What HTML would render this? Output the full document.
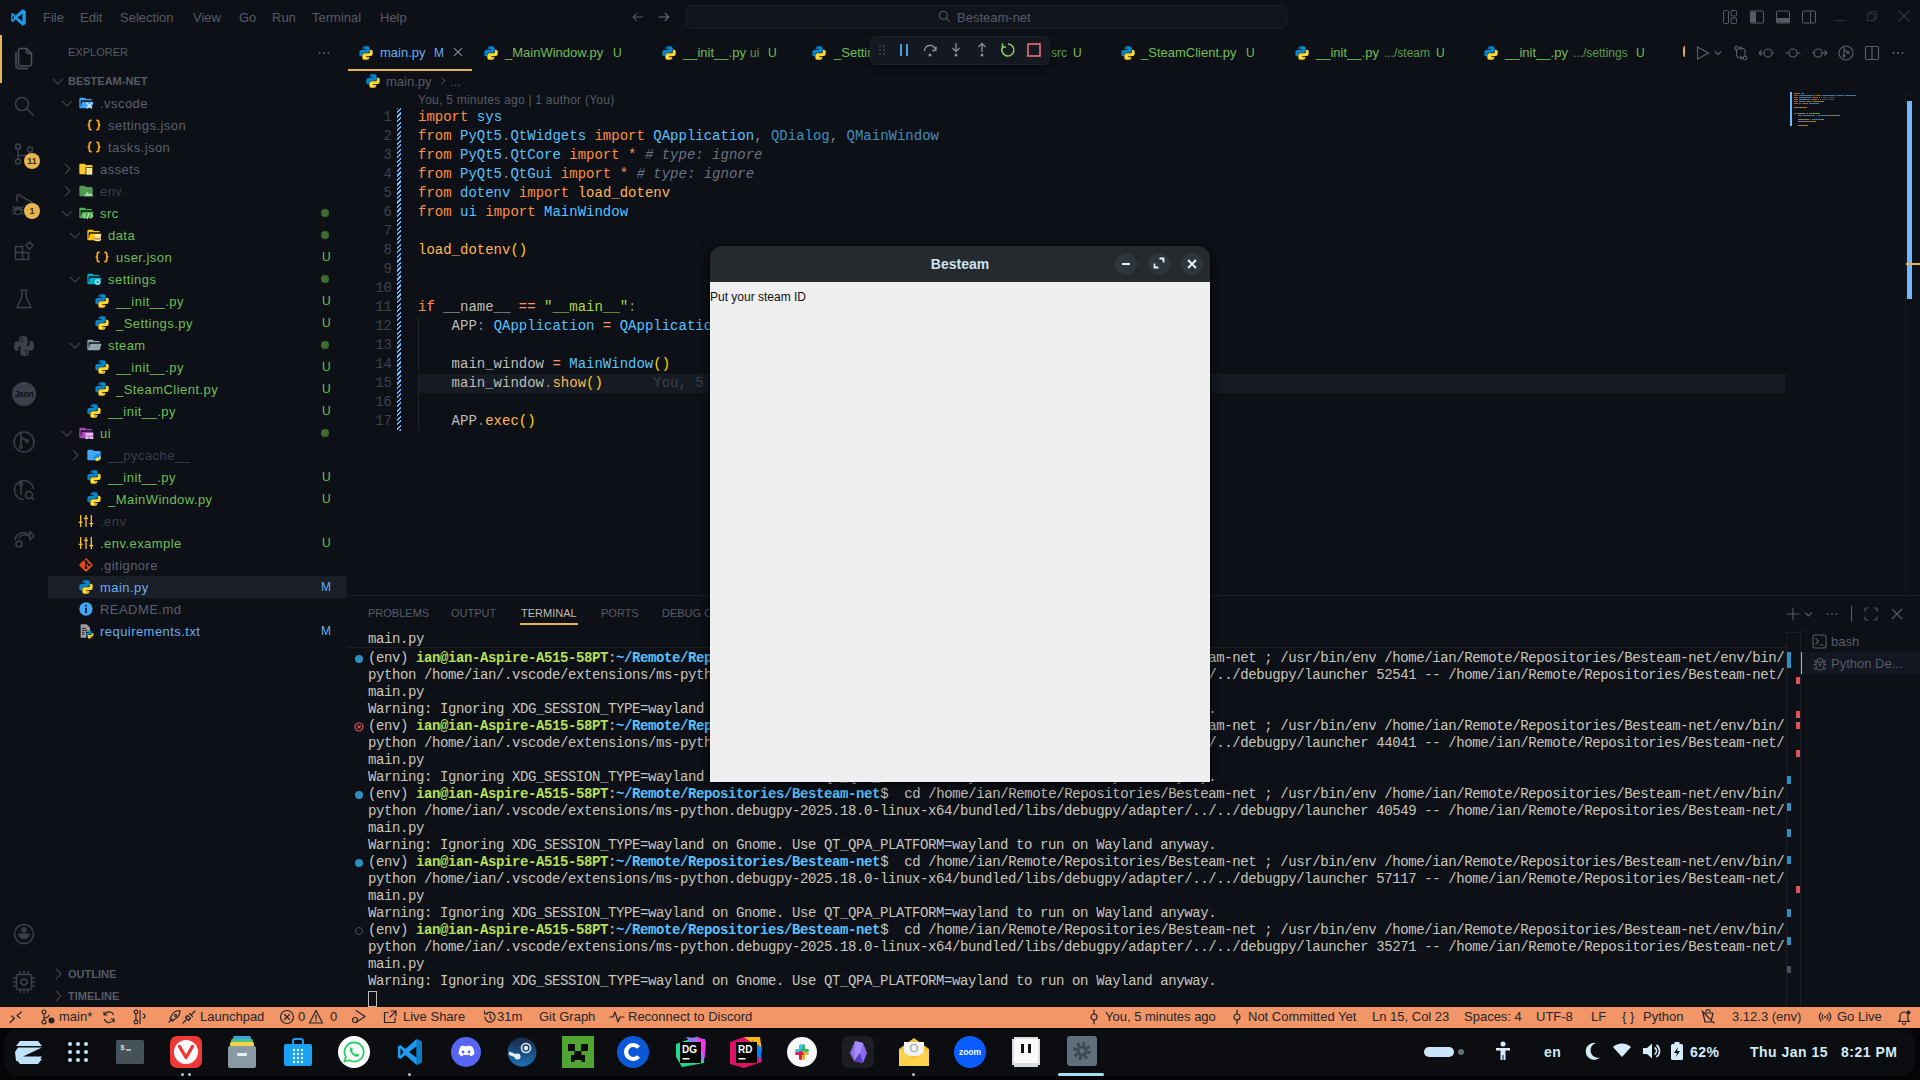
<!DOCTYPE html>
<html><head><meta charset="utf-8">
<style>

*{margin:0;padding:0;box-sizing:border-box}
html,body{width:1920px;height:1080px;overflow:hidden;background:#0d1017;font-family:"Liberation Sans",sans-serif;color:#565b66}
.a{position:absolute;white-space:pre}
svg{position:absolute;overflow:visible}
.mono{font-family:"Liberation Mono",monospace}
.g{color:#70bf56}.m{color:#6aaef0}.dim{color:#3d424c}

.code{position:absolute;font-family:"Liberation Mono",monospace;font-size:14px;line-height:19px;white-space:pre;color:#bfbdb6}
.ef{color:#59c2ff;opacity:.7}.k{color:#ff8f40}.e{color:#59c2ff}.fn{color:#ffb454}.s{color:#aad94c}.cm{color:#6b7180;font-style:italic}.op{color:#f29668}.t{color:#bfbdb6}.pu{color:#bfbdb6b3}.br{color:#ffd700}
.ln{position:absolute;font-family:"Liberation Mono",monospace;font-size:14px;line-height:19px;color:#3d424d;text-align:right;width:40px;left:352px}

.tl{position:absolute;left:368px;font-family:"Liberation Mono",monospace;font-size:14px;line-height:17px;white-space:pre;color:#c8c6bf;letter-spacing:-0.4px}
.tg{color:#b8e05a;font-weight:bold}.tb{color:#59c2ff;font-weight:bold}

</style></head><body>

<div id="menu"><div class="a" style="left:43px;top:10px;font-size:13px;color:#565b66">File</div><div class="a" style="left:80px;top:10px;font-size:13px;color:#565b66">Edit</div><div class="a" style="left:120px;top:10px;font-size:13px;color:#565b66">Selection</div><div class="a" style="left:193px;top:10px;font-size:13px;color:#565b66">View</div><div class="a" style="left:239px;top:10px;font-size:13px;color:#565b66">Go</div><div class="a" style="left:272px;top:10px;font-size:13px;color:#565b66">Run</div><div class="a" style="left:312px;top:10px;font-size:13px;color:#565b66">Terminal</div><div class="a" style="left:380px;top:10px;font-size:13px;color:#565b66">Help</div><svg style="left:10px;top:9px" width="17" height="17" viewBox="0 0 24 24"><path fill="#1c9ce9" d="M17.5 0.5L8 9.2 3.6 5.8 1.7 6.7v10.6l1.9.9L8 14.8l9.5 8.7 4.8-2.3V2.8z M3.6 8.6L6.2 12 3.6 15.4z M17.5 6.6v10.8L10.6 12z"/></svg><svg style="left:631px;top:10px" width="14" height="14" viewBox="0 0 16 16"><path d="M14 8H2.5M7 3.5L2.5 8 7 12.5" stroke="#565b66" stroke-width="1.2" fill="none"/></svg><svg style="left:657px;top:10px" width="14" height="14" viewBox="0 0 16 16"><path d="M2 8h11.5M9 3.5L13.5 8 9 12.5" stroke="#6c7380" stroke-width="1.2" fill="none"/></svg><div class="a" style="left:686px;top:5px;width:601px;height:24px;border:1px solid #1c2029;border-radius:6px;background:#11141b"></div><svg style="left:938px;top:10px" width="13" height="13" viewBox="0 0 16 16"><circle cx="6.5" cy="6.5" r="5" stroke="#565b66" stroke-width="1.3" fill="none"/><path d="M10 10l4.5 4.5" stroke="#565b66" stroke-width="1.3"/></svg><div class="a" style="left:957px;top:10px;font-size:13px;color:#565b66">Besteam-net</div><svg style="left:1722px;top:9px" width="16" height="16" viewBox="0 0 16 16"><rect x="1.5" y="1.5" width="5" height="13" rx="1" stroke="#565b66" fill="none"/><rect x="9" y="1.5" width="5.5" height="5.5" rx="1" stroke="#565b66" fill="none"/><rect x="9" y="9" width="5.5" height="5.5" rx="1" stroke="#565b66" fill="none"/></svg><svg style="left:1749px;top:9px" width="16" height="16" viewBox="0 0 16 16"><rect x="1.5" y="2" width="13" height="12" rx="1" stroke="#565b66" fill="none"/><rect x="2" y="2.5" width="5" height="11" fill="#565b66"/></svg><svg style="left:1775px;top:9px" width="16" height="16" viewBox="0 0 16 16"><rect x="1.5" y="2" width="13" height="12" rx="1" stroke="#565b66" fill="none"/><rect x="2" y="9" width="12" height="4.5" fill="#565b66"/></svg><svg style="left:1801px;top:9px" width="16" height="16" viewBox="0 0 16 16"><rect x="1.5" y="2" width="13" height="12" rx="1" stroke="#565b66" fill="none"/><path d="M9.5 2v12" stroke="#565b66"/></svg><svg style="left:1834px;top:10px" width="12" height="12" viewBox="0 0 12 12"><path d="M1 10.5h10" stroke="#2e323b"/></svg><svg style="left:1866px;top:10px" width="12" height="12" viewBox="0 0 12 12"><rect x="1.5" y="3.5" width="7" height="7" stroke="#2e323b" fill="none"/><path d="M3.5 3.5v-2h7v7h-2" stroke="#2e323b" fill="none"/></svg><svg style="left:1898px;top:10px" width="12" height="12" viewBox="0 0 12 12"><path d="M1 1l10 10M11 1L1 11" stroke="#2e323b" stroke-width="1.2"/></svg></div>
<div class="a" style="left:0;top:35px;width:2px;height:48px;background:#e6b450"></div><svg style="left:12px;top:46px" width="24" height="24" viewBox="0 0 24 24"><path d="M8.5 2.5h6l5 5v10.5a2 2 0 0 1-2 2h-9a2 2 0 0 1-2-2v-13.5a2 2 0 0 1 2-2z" stroke="#4a5060" stroke-width="1.5" fill="none" stroke-linecap="round" stroke-linejoin="round"/><path d="M14.5 2.5v3a2 2 0 0 0 2 2h3" stroke="#4a5060" stroke-width="1.5" fill="none" stroke-linecap="round" stroke-linejoin="round"/><path d="M4 6.5v13a3 3 0 0 0 3 3h8.5" stroke="#4a5060" stroke-width="1.5" fill="none" stroke-linecap="round" stroke-linejoin="round"/></svg><svg style="left:12px;top:94px" width="24" height="24" viewBox="0 0 24 24"><circle cx="10" cy="10" r="6.5" stroke="#3b404b" stroke-width="1.5" fill="none" stroke-linecap="round" stroke-linejoin="round"/><path d="M15 15l6 6" stroke="#3b404b" stroke-width="1.5" fill="none" stroke-linecap="round" stroke-linejoin="round"/></svg><svg style="left:12px;top:142px" width="24" height="24" viewBox="0 0 24 24"><circle cx="6" cy="4.5" r="2.5" stroke="#3b404b" stroke-width="1.5" fill="none" stroke-linecap="round" stroke-linejoin="round"/><circle cx="6" cy="19.5" r="2.5" stroke="#3b404b" stroke-width="1.5" fill="none" stroke-linecap="round" stroke-linejoin="round"/><circle cx="18" cy="7.5" r="2.5" stroke="#3b404b" stroke-width="1.5" fill="none" stroke-linecap="round" stroke-linejoin="round"/><path d="M6 7v10M6 13.5h9a3 3 0 0 0 3-3" stroke="#3b404b" stroke-width="1.5" fill="none" stroke-linecap="round" stroke-linejoin="round"/></svg><div class="a" style="left:24px;top:153px;width:16px;height:16px;border-radius:8px;background:#e6b450;color:#3a2f12;font-size:9px;line-height:16px;text-align:center;font-weight:bold">11</div><svg style="left:12px;top:192px" width="24" height="24" viewBox="0 0 24 24"><path d="M5 9.5V3.5a1 1 0 0 1 1.5-.8L20 10.5" stroke="#3b404b" stroke-width="1.5" fill="none" stroke-linecap="round" stroke-linejoin="round"/><path d="M3.5 17.5a2.5 2.5 0 0 1 5 0z" stroke="#3b404b" stroke-width="1.5" fill="none" stroke-linecap="round" stroke-linejoin="round"/><path d="M2.8 16.5h6.4v2.5a3.2 3.6 0 0 1-6.4 0z" stroke="#3b404b" stroke-width="1.5" fill="none" stroke-linecap="round" stroke-linejoin="round"/><path d="M1 14.5l1.8 1.5M11 14.5l-1.8 1.5M0.5 18h2.3M11.5 18h-2.3M1 22l1.8-1.5M11 22l-1.8-1.5" stroke="#3b404b" stroke-width="1.5" fill="none" stroke-linecap="round" stroke-linejoin="round"/></svg><div class="a" style="left:24px;top:203px;width:16px;height:16px;border-radius:8px;background:#e6b450;color:#3a2f12;font-size:9px;line-height:16px;text-align:center;font-weight:bold">1</div><svg style="left:12px;top:239px" width="24" height="24" viewBox="0 0 24 24"><path d="M3.5 7.5h7v6h6v7h-13z M3.5 13.5h7v7M10.5 13.5v7" stroke="#3b404b" stroke-width="1.5" fill="none" stroke-linecap="round" stroke-linejoin="round"/><path d="M14 6.5l3.5-3.5 3.5 3.5-3.5 3.5z" stroke="#3b404b" stroke-width="1.5" fill="none" stroke-linecap="round" stroke-linejoin="round"/></svg><svg style="left:12px;top:287px" width="24" height="24" viewBox="0 0 24 24"><path d="M9 3h6M10 3v6.5L5 20.5h14L14 9.5V3" stroke="#3b404b" stroke-width="1.5" fill="none" stroke-linecap="round" stroke-linejoin="round"/></svg><svg style="left:12px;top:334px" width="24" height="24" viewBox="0 0 24 24"><path fill="#3b404b" d="M11.9 2c-5.2 0-4.9 2.3-4.9 2.3v2.4h5v.7H5S2 7 2 12.1c0 5 2.6 4.9 2.6 4.9h1.6v-2.4s-.1-2.6 2.6-2.6h4.4s2.5 0 2.5-2.4V5.5S16.1 2 11.9 2z M9.2 3.6c.5 0 .9.4.9.9s-.4.9-.9.9-.9-.4-.9-.9.4-.9.9-.9z"/><path fill="#3b404b" d="M12.1 22c5.2 0 4.9-2.3 4.9-2.3v-2.4h-5v-.7h7s3 .3 3-4.7c0-5-2.6-4.9-2.6-4.9h-1.6v2.4s.1 2.6-2.6 2.6H10.8s-2.5 0-2.5 2.4v4.1S7.9 22 12.1 22z M14.8 20.4c-.5 0-.9-.4-.9-.9s.4-.9.9-.9.9.4.9.9-.4.9-.9.9z"/></svg><div class="a" style="left:12px;top:382px;width:24px;height:24px;border-radius:12px;background:#3b404b;color:#0b0e14;font-size:8.5px;line-height:24px;text-align:center;font-weight:bold;letter-spacing:-0.3px">Json</div><svg style="left:12px;top:430px" width="24" height="24" viewBox="0 0 24 24"><circle cx="12" cy="12" r="10" stroke="#3b404b" stroke-width="1.5" fill="none" stroke-linecap="round" stroke-linejoin="round"/><circle cx="9" cy="17" r="1.3" stroke="#3b404b" stroke-width="1.5" fill="none" stroke-linecap="round" stroke-linejoin="round"/><circle cx="15" cy="11" r="1.3" stroke="#3b404b" stroke-width="1.5" fill="none" stroke-linecap="round" stroke-linejoin="round"/><path d="M9 3v12.5M9 8l5 2" stroke="#3b404b" stroke-width="1.5" fill="none" stroke-linecap="round" stroke-linejoin="round"/></svg><svg style="left:12px;top:478px" width="24" height="24" viewBox="0 0 24 24"><path d="M11 21.5a9.5 9.5 0 1 1 10.3-11" stroke="#3b404b" stroke-width="1.5" fill="none" stroke-linecap="round" stroke-linejoin="round"/><circle cx="9" cy="6" r="1.5" stroke="#3b404b" stroke-width="1.5" fill="none" stroke-linecap="round" stroke-linejoin="round"/><path d="M9 7.5v9" stroke="#3b404b" stroke-width="1.5" fill="none" stroke-linecap="round" stroke-linejoin="round"/><circle cx="17" cy="17" r="3.5" stroke="#3b404b" stroke-width="1.5" fill="none" stroke-linecap="round" stroke-linejoin="round"/><path d="M19.5 19.5l2 2" stroke="#3b404b" stroke-width="1.5" fill="none" stroke-linecap="round" stroke-linejoin="round"/></svg><svg style="left:12px;top:526px" width="24" height="24" viewBox="0 0 24 24"><circle cx="7" cy="18" r="3" stroke="#3b404b" stroke-width="1.5" fill="none" stroke-linecap="round" stroke-linejoin="round"/><path d="M3 13.5a9 9 0 0 1 15-4.5V5.5l4 4.5-4 4v-3a7 7 0 0 0-11 1" stroke="#3b404b" stroke-width="1.5" fill="none" stroke-linecap="round" stroke-linejoin="round"/></svg><svg style="left:12px;top:922px" width="24" height="24" viewBox="0 0 24 24"><circle cx="12" cy="12" r="9.5" stroke="#3b404b" stroke-width="1.5" fill="none" stroke-linecap="round" stroke-linejoin="round"/><circle cx="12" cy="7.8" r="2.8" fill="#3b404b"/><path d="M6.3 11.5h11.4a5.7 5.7 0 0 1-11.4 0z" fill="#3b404b"/></svg><svg style="left:12px;top:970px" width="24" height="24" viewBox="0 0 24 24"><rect x="4.5" y="4.5" width="15" height="15" rx="2" stroke="#3b404b" stroke-width="1.5" fill="none" stroke-linecap="round" stroke-linejoin="round"/><circle cx="12" cy="12" r="3" stroke="#3b404b" stroke-width="1.5" fill="none" stroke-linecap="round" stroke-linejoin="round"/><path d="M8 1.5v3M12 1.5v3M16 1.5v3M8 19.5v3M12 19.5v3M16 19.5v3M1.5 8h3M1.5 12h3M1.5 16h3M19.5 8h3M19.5 12h3M19.5 16h3" stroke="#3b404b" stroke-width="1.5" fill="none" stroke-linecap="round" stroke-linejoin="round"/></svg>
<div class="a" style="left:68px;top:46px;font-size:11px;color:#565b66">EXPLORER</div><svg style="left:316px;top:45px" width="16" height="16" viewBox="0 0 16 16"><circle cx="3.5" cy="8" r="1" fill="#565b66"/><circle cx="8" cy="8" r="1" fill="#565b66"/><circle cx="12.5" cy="8" r="1" fill="#565b66"/></svg><svg style="left:50px;top:73px" width="16" height="16" viewBox="0 0 16 16"><path d="M3 6l5 5 5-5" stroke="#3d4350" stroke-width="1.1" fill="none"/></svg><div class="a" style="left:68px;top:75px;font-size:11px;font-weight:bold;color:#565b66">BESTEAM-NET</div><svg style="left:59px;top:95px" width="16" height="16" viewBox="0 0 16 16"><path d="M3 6l5 5 5-5" stroke="#3d4350" stroke-width="1.1" fill="none"/></svg><svg style="left:78px;top:95px" width="16" height="16" viewBox="0 0 24 24"><path fill="#42a5f5" d="M19 20H4a2 2 0 0 1-2-2V6c0-1.11.89-2 2-2h6l2 2h7a2 2 0 0 1 2 2H4v10l2.14-8h17.07l-2.28 8.5c-.23.87-1.01 1.5-1.93 1.5"/><path d="M13 12l8 8M21 12l-8 8" stroke="#d6ecff" stroke-width="2"/></svg><div class="a" style="left:100px;top:96px;font-size:13px;letter-spacing:.45px;color:#5a6070">.vscode</div><svg style="left:86px;top:117px" width="16" height="16" viewBox="0 0 24 24"><path fill="none" stroke="#f9a825" stroke-width="2.6" stroke-linecap="round" d="M7.5 5H7a2 2 0 0 0-2 2v2.5a2.5 2.5 0 0 1-2.5 2.5 2.5 2.5 0 0 1 2.5 2.5V17a2 2 0 0 0 2 2h.5M16.5 5h.5a2 2 0 0 1 2 2v2.5a2.5 2.5 0 0 0 2.5 2.5 2.5 2.5 0 0 0-2.5 2.5V17a2 2 0 0 1-2 2h-.5"/></svg><div class="a" style="left:108px;top:118px;font-size:13px;letter-spacing:.45px;color:#5a6070">settings.json</div><svg style="left:86px;top:139px" width="16" height="16" viewBox="0 0 24 24"><path fill="none" stroke="#f9a825" stroke-width="2.6" stroke-linecap="round" d="M7.5 5H7a2 2 0 0 0-2 2v2.5a2.5 2.5 0 0 1-2.5 2.5 2.5 2.5 0 0 1 2.5 2.5V17a2 2 0 0 0 2 2h.5M16.5 5h.5a2 2 0 0 1 2 2v2.5a2.5 2.5 0 0 0 2.5 2.5 2.5 2.5 0 0 0-2.5 2.5V17a2 2 0 0 1-2 2h-.5"/></svg><div class="a" style="left:108px;top:140px;font-size:13px;letter-spacing:.45px;color:#5a6070">tasks.json</div><svg style="left:59px;top:161px" width="16" height="16" viewBox="0 0 16 16"><path d="M6 3l5 5-5 5" stroke="#3d4350" stroke-width="1.1" fill="none"/></svg><svg style="left:78px;top:161px" width="16" height="16" viewBox="0 0 24 24"><path fill="#ffca28" d="M10 4H4c-1.1 0-2 .9-2 2v12c0 1.1.9 2 2 2h16c1.1 0 2-.9 2-2V8c0-1.1-.9-2-2-2h-8z"/><rect x="12" y="10" width="10" height="11" fill="#fff4c4" stroke="#0b0e14" stroke-width="1"/><path d="M14 13h6M14 15.5h6M14 18h6" stroke="#ffca28" stroke-width="1.2"/></svg><div class="a" style="left:100px;top:162px;font-size:13px;letter-spacing:.45px;color:#5a6070">assets</div><svg style="left:59px;top:183px" width="16" height="16" viewBox="0 0 16 16"><path d="M6 3l5 5-5 5" stroke="#3d4350" stroke-width="1.1" fill="none"/></svg><svg style="left:78px;top:183px" width="16" height="16" viewBox="0 0 24 24"><path fill="#4e9a52" d="M10 4H4c-1.1 0-2 .9-2 2v12c0 1.1.9 2 2 2h16c1.1 0 2-.9 2-2V8c0-1.1-.9-2-2-2h-8z"/><path d="M9 20l5-7 3 4 2-2 4 5z" fill="#a5d6a7"/></svg><div class="a" style="left:100px;top:184px;font-size:13px;letter-spacing:.45px;color:#3a3f4a">env</div><svg style="left:59px;top:205px" width="16" height="16" viewBox="0 0 16 16"><path d="M3 6l5 5 5-5" stroke="#3d4350" stroke-width="1.1" fill="none"/></svg><svg style="left:78px;top:205px" width="16" height="16" viewBox="0 0 24 24"><path fill="#4caf50" d="M19 20H4a2 2 0 0 1-2-2V6c0-1.11.89-2 2-2h6l2 2h7a2 2 0 0 1 2 2H4v10l2.14-8h17.07l-2.28 8.5c-.23.87-1.01 1.5-1.93 1.5"/><path d="M11 13l-3 3.5 3 3.5M19 13l3 3.5-3 3.5M16.5 12l-3 9" stroke="#c8e6c9" stroke-width="1.6" fill="none"/></svg><div class="a" style="left:100px;top:206px;font-size:13px;letter-spacing:.45px;color:#70bf56">src</div><div class="a" style="left:321px;top:209px;width:8px;height:8px;border-radius:4px;background:#3f6b30"></div><svg style="left:67px;top:227px" width="16" height="16" viewBox="0 0 16 16"><path d="M3 6l5 5 5-5" stroke="#3d4350" stroke-width="1.1" fill="none"/></svg><svg style="left:86px;top:227px" width="16" height="16" viewBox="0 0 24 24"><path fill="#ffc107" d="M19 20H4a2 2 0 0 1-2-2V6c0-1.11.89-2 2-2h6l2 2h7a2 2 0 0 1 2 2H4v10l2.14-8h17.07l-2.28 8.5c-.23.87-1.01 1.5-1.93 1.5"/><ellipse cx="17.5" cy="12.5" rx="5" ry="2" fill="#ffecb3"/><path d="M12.5 13v6.5c0 1.1 2.2 2 5 2s5-.9 5-2V13" fill="#ffe082"/><path d="M12.5 16c0 1.1 2.2 2 5 2s5-.9 5-2" stroke="#0b0e14" stroke-width=".8" fill="none"/></svg><div class="a" style="left:108px;top:228px;font-size:13px;letter-spacing:.45px;color:#70bf56">data</div><div class="a" style="left:321px;top:231px;width:8px;height:8px;border-radius:4px;background:#3f6b30"></div><svg style="left:94px;top:249px" width="16" height="16" viewBox="0 0 24 24"><path fill="none" stroke="#f9a825" stroke-width="2.6" stroke-linecap="round" d="M7.5 5H7a2 2 0 0 0-2 2v2.5a2.5 2.5 0 0 1-2.5 2.5 2.5 2.5 0 0 1 2.5 2.5V17a2 2 0 0 0 2 2h.5M16.5 5h.5a2 2 0 0 1 2 2v2.5a2.5 2.5 0 0 0 2.5 2.5 2.5 2.5 0 0 0-2.5 2.5V17a2 2 0 0 1-2 2h-.5"/></svg><div class="a" style="left:116px;top:250px;font-size:13px;letter-spacing:.45px;color:#70bf56">user.json</div><div class="a" style="left:322px;top:250px;font-size:12px;color:#70bf56">U</div><svg style="left:67px;top:271px" width="16" height="16" viewBox="0 0 16 16"><path d="M3 6l5 5 5-5" stroke="#3d4350" stroke-width="1.1" fill="none"/></svg><svg style="left:86px;top:271px" width="16" height="16" viewBox="0 0 24 24"><path fill="#00acc1" d="M19 20H4a2 2 0 0 1-2-2V6c0-1.11.89-2 2-2h6l2 2h7a2 2 0 0 1 2 2H4v10l2.14-8h17.07l-2.28 8.5c-.23.87-1.01 1.5-1.93 1.5"/><circle cx="17.5" cy="16.5" r="4.5" fill="#80deea"/><circle cx="17.5" cy="16.5" r="1.6" fill="#00838f"/></svg><div class="a" style="left:108px;top:272px;font-size:13px;letter-spacing:.45px;color:#70bf56">settings</div><div class="a" style="left:321px;top:275px;width:8px;height:8px;border-radius:4px;background:#3f6b30"></div><svg style="left:94px;top:293px" width="16" height="16" viewBox="0 0 24 24"><path fill="#0288d1" d="M9.86 2A2.86 2.86 0 0 0 7 4.86v1.68h4.29c.39 0 .71.57.71.96H4.86A2.86 2.86 0 0 0 2 10.36v3.78a2.86 2.86 0 0 0 2.86 2.86h1.18v-2.68a2.85 2.85 0 0 1 2.85-2.86h5.74c1.58 0 2.86-1.27 2.86-2.85V4.86A2.86 2.86 0 0 0 14.63 2zm-.72 1.61c.4 0 .72.12.72.71s-.32.89-.72.89c-.39 0-.71-.3-.71-.89s.32-.71.71-.71"/><path fill="#fdd835" d="M17.96 7v2.68a2.85 2.85 0 0 1-2.85 2.86H9.37A2.85 2.85 0 0 0 6.5 15.39v3.75a2.86 2.86 0 0 0 2.86 2.86h4.77A2.86 2.86 0 0 0 17 19.14v-1.68h-4.28c-.39 0-.71-.57-.71-.96h7.14A2.86 2.86 0 0 0 22 13.64V9.86A2.86 2.86 0 0 0 19.14 7zm-3.1 11.82c.39 0 .71.3.71.89a.71.71 0 0 1-.71.71c-.4 0-.72-.12-.72-.71s.32-.89.72-.89"/></svg><div class="a" style="left:116px;top:294px;font-size:13px;letter-spacing:.45px;color:#70bf56">__init__.py</div><div class="a" style="left:322px;top:294px;font-size:12px;color:#70bf56">U</div><svg style="left:94px;top:315px" width="16" height="16" viewBox="0 0 24 24"><path fill="#0288d1" d="M9.86 2A2.86 2.86 0 0 0 7 4.86v1.68h4.29c.39 0 .71.57.71.96H4.86A2.86 2.86 0 0 0 2 10.36v3.78a2.86 2.86 0 0 0 2.86 2.86h1.18v-2.68a2.85 2.85 0 0 1 2.85-2.86h5.74c1.58 0 2.86-1.27 2.86-2.85V4.86A2.86 2.86 0 0 0 14.63 2zm-.72 1.61c.4 0 .72.12.72.71s-.32.89-.72.89c-.39 0-.71-.3-.71-.89s.32-.71.71-.71"/><path fill="#fdd835" d="M17.96 7v2.68a2.85 2.85 0 0 1-2.85 2.86H9.37A2.85 2.85 0 0 0 6.5 15.39v3.75a2.86 2.86 0 0 0 2.86 2.86h4.77A2.86 2.86 0 0 0 17 19.14v-1.68h-4.28c-.39 0-.71-.57-.71-.96h7.14A2.86 2.86 0 0 0 22 13.64V9.86A2.86 2.86 0 0 0 19.14 7zm-3.1 11.82c.39 0 .71.3.71.89a.71.71 0 0 1-.71.71c-.4 0-.72-.12-.72-.71s.32-.89.72-.89"/></svg><div class="a" style="left:116px;top:316px;font-size:13px;letter-spacing:.45px;color:#70bf56">_Settings.py</div><div class="a" style="left:322px;top:316px;font-size:12px;color:#70bf56">U</div><svg style="left:67px;top:337px" width="16" height="16" viewBox="0 0 16 16"><path d="M3 6l5 5 5-5" stroke="#3d4350" stroke-width="1.1" fill="none"/></svg><svg style="left:86px;top:337px" width="16" height="16" viewBox="0 0 24 24"><path fill="#90a4ae" d="M19 20H4a2 2 0 0 1-2-2V6c0-1.11.89-2 2-2h6l2 2h7a2 2 0 0 1 2 2H4v10l2.14-8h17.07l-2.28 8.5c-.23.87-1.01 1.5-1.93 1.5"/></svg><div class="a" style="left:108px;top:338px;font-size:13px;letter-spacing:.45px;color:#70bf56">steam</div><div class="a" style="left:321px;top:341px;width:8px;height:8px;border-radius:4px;background:#3f6b30"></div><svg style="left:94px;top:359px" width="16" height="16" viewBox="0 0 24 24"><path fill="#0288d1" d="M9.86 2A2.86 2.86 0 0 0 7 4.86v1.68h4.29c.39 0 .71.57.71.96H4.86A2.86 2.86 0 0 0 2 10.36v3.78a2.86 2.86 0 0 0 2.86 2.86h1.18v-2.68a2.85 2.85 0 0 1 2.85-2.86h5.74c1.58 0 2.86-1.27 2.86-2.85V4.86A2.86 2.86 0 0 0 14.63 2zm-.72 1.61c.4 0 .72.12.72.71s-.32.89-.72.89c-.39 0-.71-.3-.71-.89s.32-.71.71-.71"/><path fill="#fdd835" d="M17.96 7v2.68a2.85 2.85 0 0 1-2.85 2.86H9.37A2.85 2.85 0 0 0 6.5 15.39v3.75a2.86 2.86 0 0 0 2.86 2.86h4.77A2.86 2.86 0 0 0 17 19.14v-1.68h-4.28c-.39 0-.71-.57-.71-.96h7.14A2.86 2.86 0 0 0 22 13.64V9.86A2.86 2.86 0 0 0 19.14 7zm-3.1 11.82c.39 0 .71.3.71.89a.71.71 0 0 1-.71.71c-.4 0-.72-.12-.72-.71s.32-.89.72-.89"/></svg><div class="a" style="left:116px;top:360px;font-size:13px;letter-spacing:.45px;color:#70bf56">__init__.py</div><div class="a" style="left:322px;top:360px;font-size:12px;color:#70bf56">U</div><svg style="left:94px;top:381px" width="16" height="16" viewBox="0 0 24 24"><path fill="#0288d1" d="M9.86 2A2.86 2.86 0 0 0 7 4.86v1.68h4.29c.39 0 .71.57.71.96H4.86A2.86 2.86 0 0 0 2 10.36v3.78a2.86 2.86 0 0 0 2.86 2.86h1.18v-2.68a2.85 2.85 0 0 1 2.85-2.86h5.74c1.58 0 2.86-1.27 2.86-2.85V4.86A2.86 2.86 0 0 0 14.63 2zm-.72 1.61c.4 0 .72.12.72.71s-.32.89-.72.89c-.39 0-.71-.3-.71-.89s.32-.71.71-.71"/><path fill="#fdd835" d="M17.96 7v2.68a2.85 2.85 0 0 1-2.85 2.86H9.37A2.85 2.85 0 0 0 6.5 15.39v3.75a2.86 2.86 0 0 0 2.86 2.86h4.77A2.86 2.86 0 0 0 17 19.14v-1.68h-4.28c-.39 0-.71-.57-.71-.96h7.14A2.86 2.86 0 0 0 22 13.64V9.86A2.86 2.86 0 0 0 19.14 7zm-3.1 11.82c.39 0 .71.3.71.89a.71.71 0 0 1-.71.71c-.4 0-.72-.12-.72-.71s.32-.89.72-.89"/></svg><div class="a" style="left:116px;top:382px;font-size:13px;letter-spacing:.45px;color:#70bf56">_SteamClient.py</div><div class="a" style="left:322px;top:382px;font-size:12px;color:#70bf56">U</div><svg style="left:86px;top:403px" width="16" height="16" viewBox="0 0 24 24"><path fill="#0288d1" d="M9.86 2A2.86 2.86 0 0 0 7 4.86v1.68h4.29c.39 0 .71.57.71.96H4.86A2.86 2.86 0 0 0 2 10.36v3.78a2.86 2.86 0 0 0 2.86 2.86h1.18v-2.68a2.85 2.85 0 0 1 2.85-2.86h5.74c1.58 0 2.86-1.27 2.86-2.85V4.86A2.86 2.86 0 0 0 14.63 2zm-.72 1.61c.4 0 .72.12.72.71s-.32.89-.72.89c-.39 0-.71-.3-.71-.89s.32-.71.71-.71"/><path fill="#fdd835" d="M17.96 7v2.68a2.85 2.85 0 0 1-2.85 2.86H9.37A2.85 2.85 0 0 0 6.5 15.39v3.75a2.86 2.86 0 0 0 2.86 2.86h4.77A2.86 2.86 0 0 0 17 19.14v-1.68h-4.28c-.39 0-.71-.57-.71-.96h7.14A2.86 2.86 0 0 0 22 13.64V9.86A2.86 2.86 0 0 0 19.14 7zm-3.1 11.82c.39 0 .71.3.71.89a.71.71 0 0 1-.71.71c-.4 0-.72-.12-.72-.71s.32-.89.72-.89"/></svg><div class="a" style="left:108px;top:404px;font-size:13px;letter-spacing:.45px;color:#70bf56">__init__.py</div><div class="a" style="left:322px;top:404px;font-size:12px;color:#70bf56">U</div><svg style="left:59px;top:425px" width="16" height="16" viewBox="0 0 16 16"><path d="M3 6l5 5 5-5" stroke="#3d4350" stroke-width="1.1" fill="none"/></svg><svg style="left:78px;top:425px" width="16" height="16" viewBox="0 0 24 24"><path fill="#ab47bc" d="M19 20H4a2 2 0 0 1-2-2V6c0-1.11.89-2 2-2h6l2 2h7a2 2 0 0 1 2 2H4v10l2.14-8h17.07l-2.28 8.5c-.23.87-1.01 1.5-1.93 1.5"/><rect x="11" y="12" width="12" height="4" fill="#e1bee7"/><rect x="11" y="17" width="5" height="4" fill="#e1bee7"/><rect x="17" y="17" width="6" height="4" fill="#e1bee7"/></svg><div class="a" style="left:100px;top:426px;font-size:13px;letter-spacing:.45px;color:#70bf56">ui</div><div class="a" style="left:321px;top:429px;width:8px;height:8px;border-radius:4px;background:#3f6b30"></div><svg style="left:67px;top:447px" width="16" height="16" viewBox="0 0 16 16"><path d="M6 3l5 5-5 5" stroke="#3d4350" stroke-width="1.1" fill="none"/></svg><svg style="left:86px;top:447px" width="16" height="16" viewBox="0 0 24 24"><path fill="#42a5f5" d="M10 4H4c-1.1 0-2 .9-2 2v12c0 1.1.9 2 2 2h16c1.1 0 2-.9 2-2V8c0-1.1-.9-2-2-2h-8z"/><g transform="translate(11,10) scale(.5)"><path fill="#0288d1" d="M9.86 2A2.86 2.86 0 0 0 7 4.86v1.68h4.29c.39 0 .71.57.71.96H4.86A2.86 2.86 0 0 0 2 10.36v3.78a2.86 2.86 0 0 0 2.86 2.86h1.18v-2.68a2.85 2.85 0 0 1 2.85-2.86h5.74c1.58 0 2.86-1.27 2.86-2.85V4.86A2.86 2.86 0 0 0 14.63 2zm-.72 1.61c.4 0 .72.12.72.71s-.32.89-.72.89c-.39 0-.71-.3-.71-.89s.32-.71.71-.71"/><path fill="#fdd835" d="M17.96 7v2.68a2.85 2.85 0 0 1-2.85 2.86H9.37A2.85 2.85 0 0 0 6.5 15.39v3.75a2.86 2.86 0 0 0 2.86 2.86h4.77A2.86 2.86 0 0 0 17 19.14v-1.68h-4.28c-.39 0-.71-.57-.71-.96h7.14A2.86 2.86 0 0 0 22 13.64V9.86A2.86 2.86 0 0 0 19.14 7zm-3.1 11.82c.39 0 .71.3.71.89a.71.71 0 0 1-.71.71c-.4 0-.72-.12-.72-.71s.32-.89.72-.89"/></g></svg><div class="a" style="left:108px;top:448px;font-size:13px;letter-spacing:.45px;color:#3a3f4a">__pycache__</div><svg style="left:86px;top:469px" width="16" height="16" viewBox="0 0 24 24"><path fill="#0288d1" d="M9.86 2A2.86 2.86 0 0 0 7 4.86v1.68h4.29c.39 0 .71.57.71.96H4.86A2.86 2.86 0 0 0 2 10.36v3.78a2.86 2.86 0 0 0 2.86 2.86h1.18v-2.68a2.85 2.85 0 0 1 2.85-2.86h5.74c1.58 0 2.86-1.27 2.86-2.85V4.86A2.86 2.86 0 0 0 14.63 2zm-.72 1.61c.4 0 .72.12.72.71s-.32.89-.72.89c-.39 0-.71-.3-.71-.89s.32-.71.71-.71"/><path fill="#fdd835" d="M17.96 7v2.68a2.85 2.85 0 0 1-2.85 2.86H9.37A2.85 2.85 0 0 0 6.5 15.39v3.75a2.86 2.86 0 0 0 2.86 2.86h4.77A2.86 2.86 0 0 0 17 19.14v-1.68h-4.28c-.39 0-.71-.57-.71-.96h7.14A2.86 2.86 0 0 0 22 13.64V9.86A2.86 2.86 0 0 0 19.14 7zm-3.1 11.82c.39 0 .71.3.71.89a.71.71 0 0 1-.71.71c-.4 0-.72-.12-.72-.71s.32-.89.72-.89"/></svg><div class="a" style="left:108px;top:470px;font-size:13px;letter-spacing:.45px;color:#70bf56">__init__.py</div><div class="a" style="left:322px;top:470px;font-size:12px;color:#70bf56">U</div><svg style="left:86px;top:491px" width="16" height="16" viewBox="0 0 24 24"><path fill="#0288d1" d="M9.86 2A2.86 2.86 0 0 0 7 4.86v1.68h4.29c.39 0 .71.57.71.96H4.86A2.86 2.86 0 0 0 2 10.36v3.78a2.86 2.86 0 0 0 2.86 2.86h1.18v-2.68a2.85 2.85 0 0 1 2.85-2.86h5.74c1.58 0 2.86-1.27 2.86-2.85V4.86A2.86 2.86 0 0 0 14.63 2zm-.72 1.61c.4 0 .72.12.72.71s-.32.89-.72.89c-.39 0-.71-.3-.71-.89s.32-.71.71-.71"/><path fill="#fdd835" d="M17.96 7v2.68a2.85 2.85 0 0 1-2.85 2.86H9.37A2.85 2.85 0 0 0 6.5 15.39v3.75a2.86 2.86 0 0 0 2.86 2.86h4.77A2.86 2.86 0 0 0 17 19.14v-1.68h-4.28c-.39 0-.71-.57-.71-.96h7.14A2.86 2.86 0 0 0 22 13.64V9.86A2.86 2.86 0 0 0 19.14 7zm-3.1 11.82c.39 0 .71.3.71.89a.71.71 0 0 1-.71.71c-.4 0-.72-.12-.72-.71s.32-.89.72-.89"/></svg><div class="a" style="left:108px;top:492px;font-size:13px;letter-spacing:.45px;color:#70bf56">_MainWindow.py</div><div class="a" style="left:322px;top:492px;font-size:12px;color:#70bf56">U</div><svg style="left:78px;top:513px" width="16" height="16" viewBox="0 0 24 24"><path d="M4 3v18M12 3v18M20 3v18M1 14h6M9 8h6M17 16h6" stroke="#fbc02d" stroke-width="2"/></svg><div class="a" style="left:100px;top:514px;font-size:13px;letter-spacing:.45px;color:#3a3f4a">.env</div><svg style="left:78px;top:535px" width="16" height="16" viewBox="0 0 24 24"><path d="M4 3v18M12 3v18M20 3v18M1 14h6M9 8h6M17 16h6" stroke="#fbc02d" stroke-width="2"/></svg><div class="a" style="left:100px;top:536px;font-size:13px;letter-spacing:.45px;color:#70bf56">.env.example</div><div class="a" style="left:322px;top:536px;font-size:12px;color:#70bf56">U</div><svg style="left:78px;top:557px" width="16" height="16" viewBox="0 0 24 24"><path fill="#e64a19" d="M2.6 10.59L8.38 4.8l1.69 1.7c-.24.85.15 1.78.93 2.23v5.54c-.6.34-1 .99-1 1.73a2 2 0 0 0 2 2 2 2 0 0 0 2-2c0-.74-.4-1.39-1-1.73V9.41l2.07 2.09c-.07.15-.07.32-.07.5a2 2 0 0 0 2 2 2 2 0 0 0 2-2 2 2 0 0 0-2-2c-.18 0-.35 0-.5.07L13.93 7.5a1.98 1.98 0 0 0-1.15-2.34c-.43-.16-.88-.2-1.28-.09L9.8 3.38l.79-.78c.78-.79 2.04-.79 2.82 0l7.99 7.99c.79.78.79 2.04 0 2.82l-7.99 7.99c-.78.79-2.04.79-2.82 0L2.6 13.41c-.79-.78-.79-2.04 0-2.82"/></svg><div class="a" style="left:100px;top:558px;font-size:13px;letter-spacing:.45px;color:#5a6070">.gitignore</div><div class="a" style="left:48px;top:576px;width:299px;height:22px;background:#1a1e27"></div><svg style="left:78px;top:579px" width="16" height="16" viewBox="0 0 24 24"><path fill="#0288d1" d="M9.86 2A2.86 2.86 0 0 0 7 4.86v1.68h4.29c.39 0 .71.57.71.96H4.86A2.86 2.86 0 0 0 2 10.36v3.78a2.86 2.86 0 0 0 2.86 2.86h1.18v-2.68a2.85 2.85 0 0 1 2.85-2.86h5.74c1.58 0 2.86-1.27 2.86-2.85V4.86A2.86 2.86 0 0 0 14.63 2zm-.72 1.61c.4 0 .72.12.72.71s-.32.89-.72.89c-.39 0-.71-.3-.71-.89s.32-.71.71-.71"/><path fill="#fdd835" d="M17.96 7v2.68a2.85 2.85 0 0 1-2.85 2.86H9.37A2.85 2.85 0 0 0 6.5 15.39v3.75a2.86 2.86 0 0 0 2.86 2.86h4.77A2.86 2.86 0 0 0 17 19.14v-1.68h-4.28c-.39 0-.71-.57-.71-.96h7.14A2.86 2.86 0 0 0 22 13.64V9.86A2.86 2.86 0 0 0 19.14 7zm-3.1 11.82c.39 0 .71.3.71.89a.71.71 0 0 1-.71.71c-.4 0-.72-.12-.72-.71s.32-.89.72-.89"/></svg><div class="a" style="left:100px;top:580px;font-size:13px;letter-spacing:.45px;color:#6aaef0">main.py</div><div class="a" style="left:321px;top:580px;font-size:12px;color:#6aaef0">M</div><svg style="left:78px;top:601px" width="16" height="16" viewBox="0 0 24 24"><circle cx="12" cy="12" r="10" fill="#42a5f5"/><path d="M10.8 10h2.4v8h-2.4zM10.8 5.8h2.4v2.4h-2.4z" fill="#0d1017"/></svg><div class="a" style="left:100px;top:602px;font-size:13px;letter-spacing:.45px;color:#5a6070">README.md</div><svg style="left:78px;top:623px" width="16" height="16" viewBox="0 0 24 24"><path d="M4 2h9l5 5v6h-6v9H4z" fill="#9e9e9e"/><path d="M6 8h6M6 11h8M6 14h4M6 17h4" stroke="#0b0e14" stroke-width="1.2"/><g transform="translate(11,11) scale(.55)"><path fill="#0288d1" d="M9.86 2A2.86 2.86 0 0 0 7 4.86v1.68h4.29c.39 0 .71.57.71.96H4.86A2.86 2.86 0 0 0 2 10.36v3.78a2.86 2.86 0 0 0 2.86 2.86h1.18v-2.68a2.85 2.85 0 0 1 2.85-2.86h5.74c1.58 0 2.86-1.27 2.86-2.85V4.86A2.86 2.86 0 0 0 14.63 2zm-.72 1.61c.4 0 .72.12.72.71s-.32.89-.72.89c-.39 0-.71-.3-.71-.89s.32-.71.71-.71"/><path fill="#fdd835" d="M17.96 7v2.68a2.85 2.85 0 0 1-2.85 2.86H9.37A2.85 2.85 0 0 0 6.5 15.39v3.75a2.86 2.86 0 0 0 2.86 2.86h4.77A2.86 2.86 0 0 0 17 19.14v-1.68h-4.28c-.39 0-.71-.57-.71-.96h7.14A2.86 2.86 0 0 0 22 13.64V9.86A2.86 2.86 0 0 0 19.14 7zm-3.1 11.82c.39 0 .71.3.71.89a.71.71 0 0 1-.71.71c-.4 0-.72-.12-.72-.71s.32-.89.72-.89"/></g></svg><div class="a" style="left:100px;top:624px;font-size:13px;letter-spacing:.45px;color:#6aaef0">requirements.txt</div><div class="a" style="left:321px;top:624px;font-size:12px;color:#6aaef0">M</div><svg style="left:50px;top:966px" width="16" height="16" viewBox="0 0 16 16"><path d="M6 3l5 5-5 5" stroke="#3d4350" stroke-width="1.1" fill="none"/></svg><div class="a" style="left:68px;top:968px;font-size:11px;font-weight:bold;color:#565b66">OUTLINE</div><svg style="left:50px;top:988px" width="16" height="16" viewBox="0 0 16 16"><path d="M6 3l5 5-5 5" stroke="#3d4350" stroke-width="1.1" fill="none"/></svg><div class="a" style="left:68px;top:990px;font-size:11px;font-weight:bold;color:#565b66">TIMELINE</div>
<div class="a" style="left:348px;top:69px;width:124px;height:1.5px;background:#e6b450"></div><svg style="left:358px;top:45px" width="16" height="16" viewBox="0 0 24 24"><path fill="#0288d1" d="M9.86 2A2.86 2.86 0 0 0 7 4.86v1.68h4.29c.39 0 .71.57.71.96H4.86A2.86 2.86 0 0 0 2 10.36v3.78a2.86 2.86 0 0 0 2.86 2.86h1.18v-2.68a2.85 2.85 0 0 1 2.85-2.86h5.74c1.58 0 2.86-1.27 2.86-2.85V4.86A2.86 2.86 0 0 0 14.63 2zm-.72 1.61c.4 0 .72.12.72.71s-.32.89-.72.89c-.39 0-.71-.3-.71-.89s.32-.71.71-.71"/><path fill="#fdd835" d="M17.96 7v2.68a2.85 2.85 0 0 1-2.85 2.86H9.37A2.85 2.85 0 0 0 6.5 15.39v3.75a2.86 2.86 0 0 0 2.86 2.86h4.77A2.86 2.86 0 0 0 17 19.14v-1.68h-4.28c-.39 0-.71-.57-.71-.96h7.14A2.86 2.86 0 0 0 22 13.64V9.86A2.86 2.86 0 0 0 19.14 7zm-3.1 11.82c.39 0 .71.3.71.89a.71.71 0 0 1-.71.71c-.4 0-.72-.12-.72-.71s.32-.89.72-.89"/></svg><div class="a" style="left:380px;top:45px;font-size:13px;color:#6aaef0">main.py</div><div class="a" style="left:434px;top:46px;font-size:12px;color:#6aaef0">M</div><svg style="left:451px;top:45px" width="14" height="14" viewBox="0 0 16 16"><path d="M3.5 3.5l9 9M12.5 3.5l-9 9" stroke="#8a919c" stroke-width="1.2"/></svg><svg style="left:483px;top:45px" width="16" height="16" viewBox="0 0 24 24"><path fill="#0288d1" d="M9.86 2A2.86 2.86 0 0 0 7 4.86v1.68h4.29c.39 0 .71.57.71.96H4.86A2.86 2.86 0 0 0 2 10.36v3.78a2.86 2.86 0 0 0 2.86 2.86h1.18v-2.68a2.85 2.85 0 0 1 2.85-2.86h5.74c1.58 0 2.86-1.27 2.86-2.85V4.86A2.86 2.86 0 0 0 14.63 2zm-.72 1.61c.4 0 .72.12.72.71s-.32.89-.72.89c-.39 0-.71-.3-.71-.89s.32-.71.71-.71"/><path fill="#fdd835" d="M17.96 7v2.68a2.85 2.85 0 0 1-2.85 2.86H9.37A2.85 2.85 0 0 0 6.5 15.39v3.75a2.86 2.86 0 0 0 2.86 2.86h4.77A2.86 2.86 0 0 0 17 19.14v-1.68h-4.28c-.39 0-.71-.57-.71-.96h7.14A2.86 2.86 0 0 0 22 13.64V9.86A2.86 2.86 0 0 0 19.14 7zm-3.1 11.82c.39 0 .71.3.71.89a.71.71 0 0 1-.71.71c-.4 0-.72-.12-.72-.71s.32-.89.72-.89"/></svg><div class="a" style="left:505px;top:45px;font-size:13px;color:#70bf56">_MainWindow.py</div><div class="a" style="left:613px;top:46px;font-size:12px;color:#70bf56">U</div><svg style="left:661px;top:45px" width="16" height="16" viewBox="0 0 24 24"><path fill="#0288d1" d="M9.86 2A2.86 2.86 0 0 0 7 4.86v1.68h4.29c.39 0 .71.57.71.96H4.86A2.86 2.86 0 0 0 2 10.36v3.78a2.86 2.86 0 0 0 2.86 2.86h1.18v-2.68a2.85 2.85 0 0 1 2.85-2.86h5.74c1.58 0 2.86-1.27 2.86-2.85V4.86A2.86 2.86 0 0 0 14.63 2zm-.72 1.61c.4 0 .72.12.72.71s-.32.89-.72.89c-.39 0-.71-.3-.71-.89s.32-.71.71-.71"/><path fill="#fdd835" d="M17.96 7v2.68a2.85 2.85 0 0 1-2.85 2.86H9.37A2.85 2.85 0 0 0 6.5 15.39v3.75a2.86 2.86 0 0 0 2.86 2.86h4.77A2.86 2.86 0 0 0 17 19.14v-1.68h-4.28c-.39 0-.71-.57-.71-.96h7.14A2.86 2.86 0 0 0 22 13.64V9.86A2.86 2.86 0 0 0 19.14 7zm-3.1 11.82c.39 0 .71.3.71.89a.71.71 0 0 1-.71.71c-.4 0-.72-.12-.72-.71s.32-.89.72-.89"/></svg><div class="a" style="left:683px;top:45px;font-size:13px;color:#70bf56">__init__.py</div><div class="a" style="left:750px;top:46px;font-size:12px;color:#70bf56;opacity:.8">ui</div><div class="a" style="left:768px;top:46px;font-size:12px;color:#70bf56">U</div><svg style="left:811px;top:45px" width="16" height="16" viewBox="0 0 24 24"><path fill="#0288d1" d="M9.86 2A2.86 2.86 0 0 0 7 4.86v1.68h4.29c.39 0 .71.57.71.96H4.86A2.86 2.86 0 0 0 2 10.36v3.78a2.86 2.86 0 0 0 2.86 2.86h1.18v-2.68a2.85 2.85 0 0 1 2.85-2.86h5.74c1.58 0 2.86-1.27 2.86-2.85V4.86A2.86 2.86 0 0 0 14.63 2zm-.72 1.61c.4 0 .72.12.72.71s-.32.89-.72.89c-.39 0-.71-.3-.71-.89s.32-.71.71-.71"/><path fill="#fdd835" d="M17.96 7v2.68a2.85 2.85 0 0 1-2.85 2.86H9.37A2.85 2.85 0 0 0 6.5 15.39v3.75a2.86 2.86 0 0 0 2.86 2.86h4.77A2.86 2.86 0 0 0 17 19.14v-1.68h-4.28c-.39 0-.71-.57-.71-.96h7.14A2.86 2.86 0 0 0 22 13.64V9.86A2.86 2.86 0 0 0 19.14 7zm-3.1 11.82c.39 0 .71.3.71.89a.71.71 0 0 1-.71.71c-.4 0-.72-.12-.72-.71s.32-.89.72-.89"/></svg><div class="a" style="left:834px;top:45px;font-size:13px;color:#70bf56">_Settings.py</div><div class="a" style="left:1051px;top:46px;font-size:12px;color:#70bf56;opacity:.8">src</div><div class="a" style="left:1073px;top:46px;font-size:12px;color:#70bf56">U</div><svg style="left:1120px;top:45px" width="16" height="16" viewBox="0 0 24 24"><path fill="#0288d1" d="M9.86 2A2.86 2.86 0 0 0 7 4.86v1.68h4.29c.39 0 .71.57.71.96H4.86A2.86 2.86 0 0 0 2 10.36v3.78a2.86 2.86 0 0 0 2.86 2.86h1.18v-2.68a2.85 2.85 0 0 1 2.85-2.86h5.74c1.58 0 2.86-1.27 2.86-2.85V4.86A2.86 2.86 0 0 0 14.63 2zm-.72 1.61c.4 0 .72.12.72.71s-.32.89-.72.89c-.39 0-.71-.3-.71-.89s.32-.71.71-.71"/><path fill="#fdd835" d="M17.96 7v2.68a2.85 2.85 0 0 1-2.85 2.86H9.37A2.85 2.85 0 0 0 6.5 15.39v3.75a2.86 2.86 0 0 0 2.86 2.86h4.77A2.86 2.86 0 0 0 17 19.14v-1.68h-4.28c-.39 0-.71-.57-.71-.96h7.14A2.86 2.86 0 0 0 22 13.64V9.86A2.86 2.86 0 0 0 19.14 7zm-3.1 11.82c.39 0 .71.3.71.89a.71.71 0 0 1-.71.71c-.4 0-.72-.12-.72-.71s.32-.89.72-.89"/></svg><div class="a" style="left:1141px;top:45px;font-size:13px;color:#70bf56">_SteamClient.py</div><div class="a" style="left:1246px;top:46px;font-size:12px;color:#70bf56">U</div><svg style="left:1294px;top:45px" width="16" height="16" viewBox="0 0 24 24"><path fill="#0288d1" d="M9.86 2A2.86 2.86 0 0 0 7 4.86v1.68h4.29c.39 0 .71.57.71.96H4.86A2.86 2.86 0 0 0 2 10.36v3.78a2.86 2.86 0 0 0 2.86 2.86h1.18v-2.68a2.85 2.85 0 0 1 2.85-2.86h5.74c1.58 0 2.86-1.27 2.86-2.85V4.86A2.86 2.86 0 0 0 14.63 2zm-.72 1.61c.4 0 .72.12.72.71s-.32.89-.72.89c-.39 0-.71-.3-.71-.89s.32-.71.71-.71"/><path fill="#fdd835" d="M17.96 7v2.68a2.85 2.85 0 0 1-2.85 2.86H9.37A2.85 2.85 0 0 0 6.5 15.39v3.75a2.86 2.86 0 0 0 2.86 2.86h4.77A2.86 2.86 0 0 0 17 19.14v-1.68h-4.28c-.39 0-.71-.57-.71-.96h7.14A2.86 2.86 0 0 0 22 13.64V9.86A2.86 2.86 0 0 0 19.14 7zm-3.1 11.82c.39 0 .71.3.71.89a.71.71 0 0 1-.71.71c-.4 0-.72-.12-.72-.71s.32-.89.72-.89"/></svg><div class="a" style="left:1316px;top:45px;font-size:13px;color:#70bf56">__init__.py</div><div class="a" style="left:1384px;top:46px;font-size:12px;color:#70bf56;opacity:.8">.../steam</div><div class="a" style="left:1436px;top:46px;font-size:12px;color:#70bf56">U</div><svg style="left:1483px;top:45px" width="16" height="16" viewBox="0 0 24 24"><path fill="#0288d1" d="M9.86 2A2.86 2.86 0 0 0 7 4.86v1.68h4.29c.39 0 .71.57.71.96H4.86A2.86 2.86 0 0 0 2 10.36v3.78a2.86 2.86 0 0 0 2.86 2.86h1.18v-2.68a2.85 2.85 0 0 1 2.85-2.86h5.74c1.58 0 2.86-1.27 2.86-2.85V4.86A2.86 2.86 0 0 0 14.63 2zm-.72 1.61c.4 0 .72.12.72.71s-.32.89-.72.89c-.39 0-.71-.3-.71-.89s.32-.71.71-.71"/><path fill="#fdd835" d="M17.96 7v2.68a2.85 2.85 0 0 1-2.85 2.86H9.37A2.85 2.85 0 0 0 6.5 15.39v3.75a2.86 2.86 0 0 0 2.86 2.86h4.77A2.86 2.86 0 0 0 17 19.14v-1.68h-4.28c-.39 0-.71-.57-.71-.96h7.14A2.86 2.86 0 0 0 22 13.64V9.86A2.86 2.86 0 0 0 19.14 7zm-3.1 11.82c.39 0 .71.3.71.89a.71.71 0 0 1-.71.71c-.4 0-.72-.12-.72-.71s.32-.89.72-.89"/></svg><div class="a" style="left:1505px;top:45px;font-size:13px;color:#70bf56">__init__.py</div><div class="a" style="left:1573px;top:46px;font-size:12px;color:#70bf56;opacity:.8">.../settings</div><div class="a" style="left:1636px;top:46px;font-size:12px;color:#70bf56">U</div><div class="a" style="left:1683px;top:46px;width:3px;height:11px;border-left:2px solid #e6b450;border-radius:50% 0 0 50%"></div><svg style="left:1695px;top:45px" width="16" height="16" viewBox="0 0 16 16"><path d="M2.5 2l11 6-11 6z" stroke="#5a6172" stroke-width="1.1" fill="none"/></svg><svg style="left:1713px;top:48px" width="10" height="10" viewBox="0 0 10 10"><path d="M2 3.5l3 3 3-3" stroke="#5a6172" stroke-width="1.1" fill="none"/></svg><svg style="left:1733px;top:45px" width="16" height="16" viewBox="0 0 16 16"><circle cx="3.5" cy="3" r="1.8" stroke="#5a6172" stroke-width="1.1" fill="none"/><circle cx="12" cy="13" r="1.8" stroke="#5a6172" stroke-width="1.1" fill="none"/><path d="M3.5 4.8v5a3 3 0 0 0 3 3H9M7.5 11l1.8 1.8-1.8 1.8M12 11.2v-5a3 3 0 0 0-3-3H7M8.5 1.3L6.7 3.1l1.8 1.8" stroke="#5a6172" stroke-width="1.1" fill="none"/></svg><svg style="left:1758px;top:45px" width="16" height="16" viewBox="0 0 16 16"><circle cx="10" cy="8" r="4" stroke="#5a6172" stroke-width="1.1" fill="none"/><path d="M6 8H1M3.5 5.5L1 8l2.5 2.5M14 8h2" stroke="#5a6172" stroke-width="1.1" fill="none"/></svg><svg style="left:1785px;top:45px" width="16" height="16" viewBox="0 0 16 16"><circle cx="8" cy="8" r="4" stroke="#5a6172" stroke-width="1.1" fill="none"/><path d="M0.5 8h3.5M12 8h3.5" stroke="#5a6172" stroke-width="1.1" fill="none"/></svg><svg style="left:1812px;top:45px" width="16" height="16" viewBox="0 0 16 16"><circle cx="6" cy="8" r="4" stroke="#5a6172" stroke-width="1.1" fill="none"/><path d="M0 8h2M10 8h5M12.5 5.5L15 8l-2.5 2.5" stroke="#5a6172" stroke-width="1.1" fill="none"/></svg><svg style="left:1838px;top:45px" width="16" height="16" viewBox="0 0 16 16"><circle cx="8" cy="8" r="7" stroke="#5a6172" stroke-width="1.1" fill="none"/><circle cx="6" cy="11" r="1" stroke="#5a6172" stroke-width="1.1" fill="none"/><circle cx="10" cy="7.5" r="1" stroke="#5a6172" stroke-width="1.1" fill="none"/><path d="M6 2v8M6 5l3.5 2" stroke="#5a6172" stroke-width="1.1" fill="none"/></svg><svg style="left:1864px;top:45px" width="16" height="16" viewBox="0 0 16 16"><rect x="1.5" y="1.5" width="13" height="13" rx="1.5" stroke="#5a6172" stroke-width="1.1" fill="none"/><path d="M8 1.5v13" stroke="#5a6172" stroke-width="1.1" fill="none"/></svg><svg style="left:1890px;top:45px" width="16" height="16" viewBox="0 0 16 16"><circle cx="3.5" cy="8" r="1" fill="#5a6172"/><circle cx="8" cy="8" r="1" fill="#5a6172"/><circle cx="12.5" cy="8" r="1" fill="#5a6172"/></svg><div class="a" style="left:870px;top:36px;width:180px;height:29px;background:#141821;border:1px solid #1c212b;border-radius:5px;box-shadow:0 2px 6px rgba(0,0,0,.5)"></div><svg style="left:877px;top:43px" width="10" height="16" viewBox="0 0 10 16"><g fill="#3d4350"><circle cx="3" cy="3" r="1"/><circle cx="7" cy="3" r="1"/><circle cx="3" cy="7" r="1"/><circle cx="7" cy="7" r="1"/><circle cx="3" cy="11" r="1"/><circle cx="7" cy="11" r="1"/></g></svg><svg style="left:896px;top:42px" width="16" height="16" viewBox="0 0 16 16"><path d="M5 2v12M11 2v12" stroke="#59c2ff" stroke-width="1.6"/></svg><svg style="left:922px;top:42px" width="16" height="16" viewBox="0 0 16 16"><path d="M2.5 9a5.5 5 0 0 1 11-1" stroke="#8a919c" stroke-width="1.3" fill="none"/><path d="M14 4.5v4h-4" stroke="#8a919c" stroke-width="1.3" fill="none"/><circle cx="8" cy="13" r="1.5" fill="#8a919c"/></svg><svg style="left:948px;top:42px" width="16" height="16" viewBox="0 0 16 16"><path d="M8 1v8M4.5 6L8 9.5 11.5 6" stroke="#8a919c" stroke-width="1.3" fill="none"/><circle cx="8" cy="13" r="1.5" fill="#8a919c"/></svg><svg style="left:974px;top:42px" width="16" height="16" viewBox="0 0 16 16"><path d="M8 10V1.5M4.5 5L8 1.5 11.5 5" stroke="#8a919c" stroke-width="1.3" fill="none"/><circle cx="8" cy="13" r="1.5" fill="#8a919c"/></svg><svg style="left:1000px;top:42px" width="16" height="16" viewBox="0 0 16 16"><path d="M3 4.5A6 6 0 1 0 8 2" stroke="#89d26a" stroke-width="1.5" fill="none"/><path d="M2.5 1.5v3.5H6" stroke="#89d26a" stroke-width="1.5" fill="none"/></svg><svg style="left:1026px;top:42px" width="16" height="16" viewBox="0 0 16 16"><rect x="2" y="2" width="12" height="12" stroke="#f07178" stroke-width="1.6" fill="none"/></svg>
<svg style="left:365px;top:73px" width="16" height="16" viewBox="0 0 24 24"><path fill="#0288d1" d="M9.86 2A2.86 2.86 0 0 0 7 4.86v1.68h4.29c.39 0 .71.57.71.96H4.86A2.86 2.86 0 0 0 2 10.36v3.78a2.86 2.86 0 0 0 2.86 2.86h1.18v-2.68a2.85 2.85 0 0 1 2.85-2.86h5.74c1.58 0 2.86-1.27 2.86-2.85V4.86A2.86 2.86 0 0 0 14.63 2zm-.72 1.61c.4 0 .72.12.72.71s-.32.89-.72.89c-.39 0-.71-.3-.71-.89s.32-.71.71-.71"/><path fill="#fdd835" d="M17.96 7v2.68a2.85 2.85 0 0 1-2.85 2.86H9.37A2.85 2.85 0 0 0 6.5 15.39v3.75a2.86 2.86 0 0 0 2.86 2.86h4.77A2.86 2.86 0 0 0 17 19.14v-1.68h-4.28c-.39 0-.71-.57-.71-.96h7.14A2.86 2.86 0 0 0 22 13.64V9.86A2.86 2.86 0 0 0 19.14 7zm-3.1 11.82c.39 0 .71.3.71.89a.71.71 0 0 1-.71.71c-.4 0-.72-.12-.72-.71s.32-.89.72-.89"/></svg><div class="a" style="left:386px;top:74px;font-size:13px;color:#565b66">main.py</div><svg style="left:437px;top:75px" width="12" height="12" viewBox="0 0 16 16"><path d="M5.5 3l5 5-5 5" stroke="#565b66" stroke-width="1.3" fill="none"/></svg><div class="a" style="left:450px;top:74px;font-size:13px;color:#565b66">...</div><div class="a" style="left:418px;top:93px;font-size:12px;letter-spacing:.25px;color:#565b66">You, 5 minutes ago | 1 author (You)</div><div class="a" style="left:418px;top:374px;width:1367px;height:19px;background:#161a22"></div><div class="a" style="left:397px;top:108px;width:4px;height:323px;background:repeating-linear-gradient(-45deg,#73b8ff 0 1.6px,#0d1017 1.6px 3.2px)"></div><div class="a" style="left:418px;top:317px;width:1px;height:114px;background:#1d222c"></div><div class="ln" style="top:108px">1</div><div class="code" style="left:418px;top:108px"><span class="k">import</span><span class="t"> </span><span class="e">sys</span></div><div class="ln" style="top:127px">2</div><div class="code" style="left:418px;top:127px"><span class="k">from</span><span class="t"> </span><span class="e">PyQt5</span><span class="pu">.</span><span class="e">QtWidgets</span><span class="t"> </span><span class="k">import</span><span class="t"> </span><span class="e">QApplication</span><span class="pu">, </span><span class="ef">QDialog</span><span class="pu">, </span><span class="ef">QMainWindow</span></div><div class="ln" style="top:146px">3</div><div class="code" style="left:418px;top:146px"><span class="k">from</span><span class="t"> </span><span class="e">PyQt5</span><span class="pu">.</span><span class="e">QtCore</span><span class="t"> </span><span class="k">import</span><span class="t"> </span><span class="op">*</span><span class="t"> </span><span class="cm"># type: ignore</span></div><div class="ln" style="top:165px">4</div><div class="code" style="left:418px;top:165px"><span class="k">from</span><span class="t"> </span><span class="e">PyQt5</span><span class="pu">.</span><span class="e">QtGui</span><span class="t"> </span><span class="k">import</span><span class="t"> </span><span class="op">*</span><span class="t"> </span><span class="cm"># type: ignore</span></div><div class="ln" style="top:184px">5</div><div class="code" style="left:418px;top:184px"><span class="k">from</span><span class="t"> </span><span class="e">dotenv</span><span class="t"> </span><span class="k">import</span><span class="t"> </span><span class="fn">load_dotenv</span></div><div class="ln" style="top:203px">6</div><div class="code" style="left:418px;top:203px"><span class="k">from</span><span class="t"> </span><span class="e">ui</span><span class="t"> </span><span class="k">import</span><span class="t"> </span><span class="e">MainWindow</span></div><div class="ln" style="top:222px">7</div><div class="code" style="left:418px;top:222px"></div><div class="ln" style="top:241px">8</div><div class="code" style="left:418px;top:241px"><span class="fn">load_dotenv</span><span class="br">()</span></div><div class="ln" style="top:260px">9</div><div class="code" style="left:418px;top:260px"></div><div class="ln" style="top:279px">10</div><div class="code" style="left:418px;top:279px"></div><div class="ln" style="top:298px">11</div><div class="code" style="left:418px;top:298px"><span class="k">if</span><span class="t"> __name__ </span><span class="op">==</span><span class="t"> </span><span class="s">&quot;__main__&quot;</span><span class="pu">:</span></div><div class="ln" style="top:317px">12</div><div class="code" style="left:418px;top:317px"><span class="t">    APP</span><span class="pu">: </span><span class="e">QApplication</span><span class="t"> </span><span class="op">=</span><span class="t"> </span><span class="e">QApplication</span><span class="br">(</span><span class="t">sys</span><span class="pu">.</span><span class="t">argv</span><span class="br">)</span></div><div class="ln" style="top:336px">13</div><div class="code" style="left:418px;top:336px"></div><div class="ln" style="top:355px">14</div><div class="code" style="left:418px;top:355px"><span class="t">    main_window </span><span class="op">=</span><span class="t"> </span><span class="e">MainWindow</span><span class="br">()</span></div><div class="ln" style="top:374px">15</div><div class="code" style="left:418px;top:374px"><span class="t">    main_window</span><span class="pu">.</span><span class="fn">show</span><span class="br">()</span><span style="color:#3a3f49">      You, 5 minutes ago • Uncommitted changes</span></div><div class="ln" style="top:393px">16</div><div class="code" style="left:418px;top:393px"></div><div class="ln" style="top:412px">17</div><div class="code" style="left:418px;top:412px"><span class="t">    APP</span><span class="pu">.</span><span class="fn">exec</span><span class="br">()</span></div><div class="a" style="left:1790px;top:92px;width:2px;height:34px;background:#73b8ff"></div><div class="a" style="left:1794px;top:93px;width:6px;height:1px;background:#ff8f40;opacity:.6"></div><div class="a" style="left:1801px;top:93px;width:3px;height:1px;background:#59c2ff;opacity:.6"></div><div class="a" style="left:1794px;top:95px;width:4px;height:1px;background:#ff8f40;opacity:.6"></div><div class="a" style="left:1799px;top:95px;width:5px;height:1px;background:#59c2ff;opacity:.6"></div><div class="a" style="left:1804px;top:95px;width:1px;height:1px;background:#bfbdb6;opacity:.6"></div><div class="a" style="left:1805px;top:95px;width:9px;height:1px;background:#59c2ff;opacity:.6"></div><div class="a" style="left:1815px;top:95px;width:6px;height:1px;background:#ff8f40;opacity:.6"></div><div class="a" style="left:1822px;top:95px;width:12px;height:1px;background:#59c2ff;opacity:.6"></div><div class="a" style="left:1834px;top:95px;width:1px;height:1px;background:#bfbdb6;opacity:.6"></div><div class="a" style="left:1836px;top:95px;width:7px;height:1px;background:#59c2ff;opacity:.6"></div><div class="a" style="left:1843px;top:95px;width:1px;height:1px;background:#bfbdb6;opacity:.6"></div><div class="a" style="left:1845px;top:95px;width:11px;height:1px;background:#59c2ff;opacity:.6"></div><div class="a" style="left:1794px;top:97px;width:4px;height:1px;background:#ff8f40;opacity:.6"></div><div class="a" style="left:1799px;top:97px;width:5px;height:1px;background:#59c2ff;opacity:.6"></div><div class="a" style="left:1804px;top:97px;width:1px;height:1px;background:#bfbdb6;opacity:.6"></div><div class="a" style="left:1805px;top:97px;width:6px;height:1px;background:#59c2ff;opacity:.6"></div><div class="a" style="left:1812px;top:97px;width:6px;height:1px;background:#ff8f40;opacity:.6"></div><div class="a" style="left:1819px;top:97px;width:1px;height:1px;background:#f29668;opacity:.6"></div><div class="a" style="left:1821px;top:97px;width:1px;height:1px;background:#6b7180;opacity:.6"></div><div class="a" style="left:1823px;top:97px;width:5px;height:1px;background:#6b7180;opacity:.6"></div><div class="a" style="left:1829px;top:97px;width:6px;height:1px;background:#6b7180;opacity:.6"></div><div class="a" style="left:1794px;top:99px;width:4px;height:1px;background:#ff8f40;opacity:.6"></div><div class="a" style="left:1799px;top:99px;width:5px;height:1px;background:#59c2ff;opacity:.6"></div><div class="a" style="left:1804px;top:99px;width:1px;height:1px;background:#bfbdb6;opacity:.6"></div><div class="a" style="left:1805px;top:99px;width:5px;height:1px;background:#59c2ff;opacity:.6"></div><div class="a" style="left:1811px;top:99px;width:6px;height:1px;background:#ff8f40;opacity:.6"></div><div class="a" style="left:1818px;top:99px;width:1px;height:1px;background:#f29668;opacity:.6"></div><div class="a" style="left:1820px;top:99px;width:1px;height:1px;background:#6b7180;opacity:.6"></div><div class="a" style="left:1822px;top:99px;width:5px;height:1px;background:#6b7180;opacity:.6"></div><div class="a" style="left:1828px;top:99px;width:6px;height:1px;background:#6b7180;opacity:.6"></div><div class="a" style="left:1794px;top:101px;width:4px;height:1px;background:#ff8f40;opacity:.6"></div><div class="a" style="left:1799px;top:101px;width:6px;height:1px;background:#59c2ff;opacity:.6"></div><div class="a" style="left:1806px;top:101px;width:6px;height:1px;background:#ff8f40;opacity:.6"></div><div class="a" style="left:1813px;top:101px;width:11px;height:1px;background:#ffb454;opacity:.6"></div><div class="a" style="left:1794px;top:103px;width:4px;height:1px;background:#ff8f40;opacity:.6"></div><div class="a" style="left:1799px;top:103px;width:2px;height:1px;background:#59c2ff;opacity:.6"></div><div class="a" style="left:1802px;top:103px;width:6px;height:1px;background:#ff8f40;opacity:.6"></div><div class="a" style="left:1809px;top:103px;width:10px;height:1px;background:#59c2ff;opacity:.6"></div><div class="a" style="left:1794px;top:107px;width:11px;height:1px;background:#ffb454;opacity:.6"></div><div class="a" style="left:1805px;top:107px;width:2px;height:1px;background:#ffd700;opacity:.6"></div><div class="a" style="left:1794px;top:113px;width:2px;height:1px;background:#ff8f40;opacity:.6"></div><div class="a" style="left:1797px;top:113px;width:8px;height:1px;background:#bfbdb6;opacity:.6"></div><div class="a" style="left:1806px;top:113px;width:2px;height:1px;background:#f29668;opacity:.6"></div><div class="a" style="left:1809px;top:113px;width:10px;height:1px;background:#aad94c;opacity:.6"></div><div class="a" style="left:1819px;top:113px;width:1px;height:1px;background:#bfbdb6;opacity:.6"></div><div class="a" style="left:1798px;top:115px;width:3px;height:1px;background:#bfbdb6;opacity:.6"></div><div class="a" style="left:1801px;top:115px;width:1px;height:1px;background:#bfbdb6;opacity:.6"></div><div class="a" style="left:1803px;top:115px;width:12px;height:1px;background:#59c2ff;opacity:.6"></div><div class="a" style="left:1816px;top:115px;width:1px;height:1px;background:#f29668;opacity:.6"></div><div class="a" style="left:1818px;top:115px;width:12px;height:1px;background:#59c2ff;opacity:.6"></div><div class="a" style="left:1830px;top:115px;width:1px;height:1px;background:#ffd700;opacity:.6"></div><div class="a" style="left:1831px;top:115px;width:3px;height:1px;background:#bfbdb6;opacity:.6"></div><div class="a" style="left:1834px;top:115px;width:1px;height:1px;background:#bfbdb6;opacity:.6"></div><div class="a" style="left:1835px;top:115px;width:4px;height:1px;background:#bfbdb6;opacity:.6"></div><div class="a" style="left:1839px;top:115px;width:1px;height:1px;background:#ffd700;opacity:.6"></div><div class="a" style="left:1798px;top:119px;width:11px;height:1px;background:#bfbdb6;opacity:.6"></div><div class="a" style="left:1810px;top:119px;width:1px;height:1px;background:#f29668;opacity:.6"></div><div class="a" style="left:1812px;top:119px;width:10px;height:1px;background:#59c2ff;opacity:.6"></div><div class="a" style="left:1822px;top:119px;width:2px;height:1px;background:#ffd700;opacity:.6"></div><div class="a" style="left:1798px;top:121px;width:11px;height:1px;background:#bfbdb6;opacity:.6"></div><div class="a" style="left:1809px;top:121px;width:1px;height:1px;background:#bfbdb6;opacity:.6"></div><div class="a" style="left:1810px;top:121px;width:4px;height:1px;background:#ffb454;opacity:.6"></div><div class="a" style="left:1814px;top:121px;width:2px;height:1px;background:#ffd700;opacity:.6"></div><div class="a" style="left:1798px;top:125px;width:3px;height:1px;background:#bfbdb6;opacity:.6"></div><div class="a" style="left:1801px;top:125px;width:1px;height:1px;background:#bfbdb6;opacity:.6"></div><div class="a" style="left:1802px;top:125px;width:4px;height:1px;background:#ffb454;opacity:.6"></div><div class="a" style="left:1806px;top:125px;width:2px;height:1px;background:#ffd700;opacity:.6"></div><div class="a" style="left:1907px;top:101px;width:5px;height:198px;background:#73b8ff"></div><div class="a" style="left:1906px;top:263px;width:14px;height:2px;background:#e6b450"></div><div class="a" style="left:1905px;top:92px;width:1px;height:505px;background:#151920"></div>
<div class="a" style="left:348px;top:595px;width:1572px;height:1px;background:#1a1e27"></div><div class="a" style="left:368px;top:607px;font-size:11px;color:#565b66">PROBLEMS</div><div class="a" style="left:451px;top:607px;font-size:11px;color:#565b66">OUTPUT</div><div class="a" style="left:521px;top:607px;font-size:11px;color:#bfbdb6">TERMINAL</div><div class="a" style="left:601px;top:607px;font-size:11px;color:#565b66">PORTS</div><div class="a" style="left:662px;top:607px;font-size:11px;color:#565b66">DEBUG CONSOLE</div><div class="a" style="left:520px;top:623px;width:58px;height:2px;background:#e6b450"></div><svg style="left:1785px;top:606px" width="16" height="16" viewBox="0 0 16 16"><path d="M8 1.5v13M1.5 8h13" stroke="#565b66" stroke-width="1.1" fill="none"/></svg><svg style="left:1803px;top:608px" width="10" height="12" viewBox="0 0 10 12"><path d="M2 4.5l3.5 3.5 3.5-3.5" stroke="#565b66" stroke-width="1.1" fill="none"/></svg><svg style="left:1824px;top:606px" width="16" height="16" viewBox="0 0 16 16"><circle cx="3.5" cy="8" r=".9" fill="#565b66"/><circle cx="8" cy="8" r=".9" fill="#565b66"/><circle cx="12.5" cy="8" r=".9" fill="#565b66"/></svg><div class="a" style="left:1851px;top:606px;width:1px;height:16px;background:#565b66"></div><svg style="left:1863px;top:606px" width="16" height="16" viewBox="0 0 16 16"><path d="M2 5.5V3a1 1 0 0 1 1-1h2.5M10.5 2H13a1 1 0 0 1 1 1v2.5M14 10.5V13a1 1 0 0 1-1 1h-2.5M5.5 14H3a1 1 0 0 1-1-1v-2.5" stroke="#565b66" stroke-width="1.1" fill="none"/></svg><svg style="left:1889px;top:606px" width="16" height="16" viewBox="0 0 16 16"><path d="M3 3l10 10M13 3L3 13" stroke="#565b66" stroke-width="1.1" fill="none"/></svg><div class="a" style="left:1800px;top:630px;width:1px;height:377px;background:#1a1e27"></div><div class="a" style="left:1786px;top:632px;width:1px;height:375px;background:#1a1e27"></div><div class="a" style="left:1786px;top:632px;width:14px;height:1px;background:#1a1e27"></div><svg style="left:1812px;top:634px" width="16" height="16" viewBox="0 0 16 16"><rect x="1" y="1" width="13" height="13" rx="2" stroke="#565b66" stroke-width="1.1" fill="none"/><path d="M3.5 4.5l3 3-3 3M7.5 11h4" stroke="#565b66" stroke-width="1.1" fill="none"/></svg><div class="a" style="left:1831px;top:634px;font-size:13px;color:#565b66">bash</div><div class="a" style="left:1801px;top:652px;width:119px;height:22px;background:#131721"></div><div class="a" style="left:1801px;top:652px;width:1px;height:22px;background:#e6b450"></div><svg style="left:1812px;top:656px" width="16" height="16" viewBox="0 0 16 16"><path d="M5 5.5a3 3 0 0 1 6 0M4 6h8v4a4 4 0 0 1-8 0z M1.5 8.5h2.5M12 8.5h2.5M2 4.5l2 1.5M14 4.5l-2 1.5M2 13.5l2.5-1.5M14 13.5l-2.5-1.5M6.5 7.5l3 3M9.5 7.5l-3 3" stroke="#565b66" stroke-width="1.1" fill="none"/></svg><div class="a" style="left:1831px;top:656px;font-size:13px;color:#565b66">Python De...</div><div class="tl" style="top:631px">main.py</div><div class="a" style="left:348px;top:647px;width:1438px;height:1px;background:#1a1e27"></div><div class="a" style="left:355px;top:655px;width:8px;height:8px;border-radius:4px;background:#2b8fc0"></div><div class="tl" style="top:650px">(env) <span class="tg">ian@ian-Aspire-A515-58PT</span>:<span class="tb">~/Remote/Repositories/Besteam-net</span>$  cd /home/ian/Remote/Repositories/Besteam-net ; /usr/bin/env /home/ian/Remote/Repositories/Besteam-net/env/bin/</div><div class="tl" style="top:667px">python /home/ian/.vscode/extensions/ms-python.debugpy-2025.18.0-linux-x64/bundled/libs/debugpy/adapter/../../debugpy/launcher 52541 -- /home/ian/Remote/Repositories/Besteam-net/</div><div class="tl" style="top:684px">main.py</div><div class="tl" style="top:701px">Warning: Ignoring XDG_SESSION_TYPE=wayland on Gnome. Use QT_QPA_PLATFORM=wayland to run on Wayland anyway.</div><svg style="left:354px;top:722px" width="10" height="10" viewBox="0 0 10 10"><circle cx="5" cy="5" r="4" stroke="#e0525b" stroke-width="1.2" fill="none"/><path d="M3.3 3.3l3.4 3.4M6.7 3.3L3.3 6.7" stroke="#e0525b" stroke-width="1.1"/></svg><div class="tl" style="top:718px">(env) <span class="tg">ian@ian-Aspire-A515-58PT</span>:<span class="tb">~/Remote/Repositories/Besteam-net</span>$  cd /home/ian/Remote/Repositories/Besteam-net ; /usr/bin/env /home/ian/Remote/Repositories/Besteam-net/env/bin/</div><div class="tl" style="top:735px">python /home/ian/.vscode/extensions/ms-python.debugpy-2025.18.0-linux-x64/bundled/libs/debugpy/adapter/../../debugpy/launcher 44041 -- /home/ian/Remote/Repositories/Besteam-net/</div><div class="tl" style="top:752px">main.py</div><div class="tl" style="top:769px">Warning: Ignoring XDG_SESSION_TYPE=wayland on Gnome. Use QT_QPA_PLATFORM=wayland to run on Wayland anyway.</div><div class="a" style="left:355px;top:791px;width:8px;height:8px;border-radius:4px;background:#2b8fc0"></div><div class="tl" style="top:786px">(env) <span class="tg">ian@ian-Aspire-A515-58PT</span>:<span class="tb">~/Remote/Repositories/Besteam-net</span>$  cd /home/ian/Remote/Repositories/Besteam-net ; /usr/bin/env /home/ian/Remote/Repositories/Besteam-net/env/bin/</div><div class="tl" style="top:803px">python /home/ian/.vscode/extensions/ms-python.debugpy-2025.18.0-linux-x64/bundled/libs/debugpy/adapter/../../debugpy/launcher 40549 -- /home/ian/Remote/Repositories/Besteam-net/</div><div class="tl" style="top:820px">main.py</div><div class="tl" style="top:837px">Warning: Ignoring XDG_SESSION_TYPE=wayland on Gnome. Use QT_QPA_PLATFORM=wayland to run on Wayland anyway.</div><div class="a" style="left:355px;top:859px;width:8px;height:8px;border-radius:4px;background:#2b8fc0"></div><div class="tl" style="top:854px">(env) <span class="tg">ian@ian-Aspire-A515-58PT</span>:<span class="tb">~/Remote/Repositories/Besteam-net</span>$  cd /home/ian/Remote/Repositories/Besteam-net ; /usr/bin/env /home/ian/Remote/Repositories/Besteam-net/env/bin/</div><div class="tl" style="top:871px">python /home/ian/.vscode/extensions/ms-python.debugpy-2025.18.0-linux-x64/bundled/libs/debugpy/adapter/../../debugpy/launcher 57117 -- /home/ian/Remote/Repositories/Besteam-net/</div><div class="tl" style="top:888px">main.py</div><div class="tl" style="top:905px">Warning: Ignoring XDG_SESSION_TYPE=wayland on Gnome. Use QT_QPA_PLATFORM=wayland to run on Wayland anyway.</div><div class="a" style="left:355px;top:927px;width:8px;height:8px;border-radius:4px;border:1.5px solid #4a505a"></div><div class="tl" style="top:922px">(env) <span class="tg">ian@ian-Aspire-A515-58PT</span>:<span class="tb">~/Remote/Repositories/Besteam-net</span>$  cd /home/ian/Remote/Repositories/Besteam-net ; /usr/bin/env /home/ian/Remote/Repositories/Besteam-net/env/bin/</div><div class="tl" style="top:939px">python /home/ian/.vscode/extensions/ms-python.debugpy-2025.18.0-linux-x64/bundled/libs/debugpy/adapter/../../debugpy/launcher 35271 -- /home/ian/Remote/Repositories/Besteam-net/</div><div class="tl" style="top:956px">main.py</div><div class="tl" style="top:973px">Warning: Ignoring XDG_SESSION_TYPE=wayland on Gnome. Use QT_QPA_PLATFORM=wayland to run on Wayland anyway.</div><div class="a" style="left:368px;top:991px;width:9px;height:16px;border:1px solid #bfbdb6"></div><div class="a" style="left:1787px;top:652px;width:4px;height:16px;background:#2b8fc0"></div><div class="a" style="left:1787px;top:776px;width:4px;height:8px;background:#2b8fc0"></div><div class="a" style="left:1787px;top:803px;width:4px;height:8px;background:#2b8fc0"></div><div class="a" style="left:1787px;top:829px;width:4px;height:8px;background:#2b8fc0"></div><div class="a" style="left:1787px;top:856px;width:4px;height:8px;background:#2b8fc0"></div><div class="a" style="left:1787px;top:909px;width:4px;height:8px;background:#2b8fc0"></div><div class="a" style="left:1787px;top:937px;width:4px;height:8px;background:#2b8fc0"></div><div class="a" style="left:1796px;top:677px;width:4px;height:7px;background:#e0525b"></div><div class="a" style="left:1796px;top:711px;width:4px;height:7px;background:#e0525b"></div><div class="a" style="left:1796px;top:722px;width:4px;height:7px;background:#e0525b"></div><div class="a" style="left:1796px;top:750px;width:4px;height:7px;background:#e0525b"></div><div class="a" style="left:1796px;top:886px;width:4px;height:7px;background:#e0525b"></div><div class="a" style="left:1787px;top:966px;width:4px;height:7px;background:#4a505a"></div>
<div class="a" style="left:0;top:1007px;width:1920px;height:21px;background:#f29668"></div><svg style="left:8px;top:1009px" width="16" height="16" viewBox="0 0 16 16"><path d="M2 13.5l4.5-4-3-2.5M13.5 3l-4.5 3.5 3 2.5" stroke="#24262b" stroke-width="1.2" fill="none" stroke-linecap="round" stroke-linejoin="round"/></svg><svg style="left:40px;top:1009px" width="16" height="16" viewBox="0 0 16 16"><circle cx="4" cy="3" r="2" stroke="#24262b" stroke-width="1.2" fill="none" stroke-linecap="round" stroke-linejoin="round"/><circle cx="4" cy="13" r="2" stroke="#24262b" stroke-width="1.2" fill="none" stroke-linecap="round" stroke-linejoin="round"/><path d="M4 5v6M4 9a5 4 0 0 0 5-3" stroke="#24262b" stroke-width="1.2" fill="none" stroke-linecap="round" stroke-linejoin="round"/><circle cx="11.5" cy="11.5" r="3" fill="#24262b"/></svg><div class="a" style="left:59px;top:1009px;font-size:13px;color:#24262b">main*</div><svg style="left:101px;top:1009px" width="16" height="16" viewBox="0 0 16 16"><path d="M12.5 5.5A5 5 0 0 0 3.5 6M3.5 10.5a5 5 0 0 0 9 0.5M3 3v3h3M13 13v-3h-3" stroke="#24262b" stroke-width="1.2" fill="none" stroke-linecap="round" stroke-linejoin="round"/></svg><svg style="left:132px;top:1009px" width="16" height="16" viewBox="0 0 16 16"><circle cx="4" cy="3" r="1.8" stroke="#24262b" stroke-width="1.2" fill="none" stroke-linecap="round" stroke-linejoin="round"/><circle cx="4" cy="13" r="1.8" stroke="#24262b" stroke-width="1.2" fill="none" stroke-linecap="round" stroke-linejoin="round"/><path d="M4 5v6M8 1.5v13M11 5a2 2 0 1 1 0 4" stroke="#24262b" stroke-width="1.2" fill="none" stroke-linecap="round" stroke-linejoin="round"/></svg><svg style="left:166px;top:1009px" width="16" height="16" viewBox="0 0 16 16"><path d="M3 13l3-3M6 6c2-4 6-4.5 8-4.5 0 2-.5 6-4.5 8L6.5 12 4 9.5z M9.5 5.5a1 1 0 1 0 .1 0" stroke="#24262b" stroke-width="1.2" fill="none" stroke-linecap="round" stroke-linejoin="round"/></svg><svg style="left:181px;top:1009px" width="16" height="16" viewBox="0 0 16 16"><path d="M2 14l3-3M14 2l-3 3M4.5 8.5l3 3 2-2-3-3zM8.5 4.5l3 3" stroke="#24262b" stroke-width="1.2" fill="none" stroke-linecap="round" stroke-linejoin="round"/></svg><div class="a" style="left:200px;top:1009px;font-size:13px;color:#24262b">Launchpad</div><svg style="left:279px;top:1009px" width="16" height="16" viewBox="0 0 16 16"><circle cx="8" cy="8" r="6.5" stroke="#24262b" stroke-width="1.2" fill="none" stroke-linecap="round" stroke-linejoin="round"/><path d="M5.5 5.5l5 5M10.5 5.5l-5 5" stroke="#24262b" stroke-width="1.2" fill="none" stroke-linecap="round" stroke-linejoin="round"/></svg><div class="a" style="left:298px;top:1009px;font-size:13px;color:#24262b">0</div><svg style="left:308px;top:1009px" width="16" height="16" viewBox="0 0 16 16"><path d="M8 1.5l6.5 12.5h-13z M8 6v4M8 11.5v.5" stroke="#24262b" stroke-width="1.2" fill="none" stroke-linecap="round" stroke-linejoin="round"/></svg><div class="a" style="left:330px;top:1009px;font-size:13px;color:#24262b">0</div><svg style="left:350px;top:1009px" width="16" height="16" viewBox="0 0 16 16"><path d="M6 1.5l9 6-9 6" stroke="#24262b" stroke-width="1.2" fill="none" stroke-linecap="round" stroke-linejoin="round"/><circle cx="5" cy="11" r="2.5" stroke="#24262b" stroke-width="1.2" fill="none" stroke-linecap="round" stroke-linejoin="round"/></svg><svg style="left:382px;top:1009px" width="16" height="16" viewBox="0 0 16 16"><path d="M13 9v4.5H2.5v-10H6M9 2h5v5M14 2L8 8" stroke="#24262b" stroke-width="1.2" fill="none" stroke-linecap="round" stroke-linejoin="round"/></svg><div class="a" style="left:403px;top:1009px;font-size:13px;color:#24262b">Live Share</div><svg style="left:482px;top:1009px" width="16" height="16" viewBox="0 0 16 16"><path d="M3 8a5 5 0 1 0 1.5-3.5M2.5 2v3h3M8 5v3.5l2 1.5" stroke="#24262b" stroke-width="1.2" fill="none" stroke-linecap="round" stroke-linejoin="round"/></svg><div class="a" style="left:497px;top:1009px;font-size:13px;color:#24262b">31m</div><div class="a" style="left:539px;top:1009px;font-size:13px;color:#24262b">Git Graph</div><svg style="left:609px;top:1009px" width="16" height="16" viewBox="0 0 16 16"><path d="M1 8h3l2-5 3 10 2-5h4" stroke="#24262b" stroke-width="1.2" fill="none" stroke-linecap="round" stroke-linejoin="round"/></svg><div class="a" style="left:628px;top:1009px;font-size:13px;color:#24262b">Reconnect to Discord</div><svg style="left:1086px;top:1009px" width="16" height="16" viewBox="0 0 16 16"><circle cx="8" cy="8" r="3" stroke="#24262b" stroke-width="1.2" fill="none" stroke-linecap="round" stroke-linejoin="round"/><path d="M8 1v4M8 11v4" stroke="#24262b" stroke-width="1.2" fill="none" stroke-linecap="round" stroke-linejoin="round"/></svg><div class="a" style="left:1105px;top:1009px;font-size:13px;color:#24262b">You, 5 minutes ago</div><svg style="left:1229px;top:1009px" width="16" height="16" viewBox="0 0 16 16"><circle cx="8" cy="8" r="3" stroke="#24262b" stroke-width="1.2" fill="none" stroke-linecap="round" stroke-linejoin="round"/><path d="M8 1v4M8 11v4" stroke="#24262b" stroke-width="1.2" fill="none" stroke-linecap="round" stroke-linejoin="round"/></svg><div class="a" style="left:1248px;top:1009px;font-size:13px;color:#24262b">Not Committed Yet</div><div class="a" style="left:1372px;top:1009px;font-size:13px;color:#24262b">Ln 15, Col 23</div><div class="a" style="left:1464px;top:1009px;font-size:13px;color:#24262b">Spaces: 4</div><div class="a" style="left:1536px;top:1009px;font-size:13px;color:#24262b">UTF-8</div><div class="a" style="left:1591px;top:1009px;font-size:13px;color:#24262b">LF</div><div class="a" style="left:1622px;top:1009px;font-size:13px;color:#24262b">{ }</div><div class="a" style="left:1643px;top:1009px;font-size:13px;color:#24262b">Python</div><svg style="left:1700px;top:1009px" width="16" height="16" viewBox="0 0 16 16"><path d="M3 4h10l-2 9H5z M6 2.5a2 2 0 0 1 4 0M2 2l12 12" stroke="#24262b" stroke-width="1.2" fill="none" stroke-linecap="round" stroke-linejoin="round"/></svg><div class="a" style="left:1732px;top:1009px;font-size:13px;color:#24262b">3.12.3 (env)</div><svg style="left:1817px;top:1009px" width="16" height="16" viewBox="0 0 16 16"><path d="M4 4a5.5 5.5 0 0 0 0 8M12 4a5.5 5.5 0 0 1 0 8M6 6a2.5 2.5 0 0 0 0 4M10 6a2.5 2.5 0 0 1 0 4" stroke="#24262b" stroke-width="1.2" fill="none" stroke-linecap="round" stroke-linejoin="round"/><circle cx="8" cy="8" r="1" fill="#24262b"/></svg><div class="a" style="left:1837px;top:1009px;font-size:13px;color:#24262b">Go Live</div><svg style="left:1896px;top:1009px" width="16" height="16" viewBox="0 0 16 16"><path d="M4 11V7a4 4 0 0 1 8 0v4l1.5 1.5h-11zM6.5 14a1.5 1.5 0 0 0 3 0" stroke="#24262b" stroke-width="1.2" fill="none" stroke-linecap="round" stroke-linejoin="round"/><circle cx="12.5" cy="3.5" r="2" fill="#24262b"/></svg>
<div class="a" style="left:0;top:1028px;width:1920px;height:52px;background:#040506"></div><div class="a" style="left:4px;top:1029px;width:1911px;height:47px;background:#0b0d10;border-radius:14px"></div><svg style="left:15px;top:1040px" width="28" height="25" viewBox="0 0 28 25"><path d="M5 1h18l4 5H1z" fill="#bfe3fb"/><path d="M1 19h26l-4 5H5z" fill="#bfe3fb"/><path d="M0 12.5L3 8h24l-19 9h19l-3 4.5H1z" fill="#bfe3fb" transform="translate(0,-.5)"/></svg><svg style="left:67px;top:1041px" width="22" height="22" viewBox="0 0 22 22"><circle cx="3" cy="3" r="2" fill="#c7e2f6"/><circle cx="3" cy="11" r="2" fill="#c7e2f6"/><circle cx="3" cy="19" r="2" fill="#c7e2f6"/><circle cx="11" cy="3" r="2" fill="#c7e2f6"/><circle cx="11" cy="11" r="2" fill="#c7e2f6"/><circle cx="11" cy="19" r="2" fill="#c7e2f6"/><circle cx="19" cy="3" r="2" fill="#c7e2f6"/><circle cx="19" cy="11" r="2" fill="#c7e2f6"/><circle cx="19" cy="19" r="2" fill="#c7e2f6"/></svg><svg style="left:116px;top:1040px" width="28" height="24" viewBox="0 0 28 24"><rect x="0" y="0" width="28" height="24" rx="1.5" fill="#46525a"/><text x="4" y="10" font-size="8" fill="#e8eef2" font-family="Liberation Mono">$</text><path d="M10 10h5" stroke="#e8eef2" stroke-width="1.2"/></svg><svg style="left:170px;top:1036px" width="32" height="32" viewBox="0 0 32 32"><rect width="32" height="32" rx="7" fill="#ef3939"/><circle cx="16" cy="16" r="12" fill="#fff"/><path d="M9.5 10.5l6.5 11 6.5-11" stroke="#ef3939" stroke-width="3.4" fill="none" stroke-linecap="round" stroke-linejoin="round"/></svg><div class="a" style="left:181px;top:1073px;width:3px;height:3px;border-radius:2px;background:#b8c6d1"></div><div class="a" style="left:188px;top:1073px;width:3px;height:3px;border-radius:2px;background:#b8c6d1"></div><svg style="left:228px;top:1036px" width="28" height="32" viewBox="0 0 28 32"><rect x="5" y="0" width="18" height="6" rx="1.5" fill="#3aa0e8"/><rect x="3" y="3" width="22" height="5" rx="1.5" fill="#4bc27d"/><rect x="2" y="6" width="24" height="5" rx="1.5" fill="#f6d34a"/><rect x="0" y="10" width="28" height="22" rx="2" fill="#8a9aa5"/><rect x="9" y="17" width="10" height="3" rx="1" fill="#e9eef1"/></svg><svg style="left:284px;top:1038px" width="28" height="28" viewBox="0 0 28 28"><path d="M9 6V3a2 2 0 0 1 2-2h6a2 2 0 0 1 2 2v3" stroke="#1d9bf0" stroke-width="2" fill="none"/><rect x="0" y="6" width="28" height="22" rx="2" fill="#1aa1f1"/><circle cx="10" cy="12" r="1.2" fill="#e8f6ff"/><circle cx="10" cy="16" r="1.2" fill="#e8f6ff"/><circle cx="10" cy="20" r="1.2" fill="#e8f6ff"/><circle cx="10" cy="24" r="1.2" fill="#e8f6ff"/><circle cx="14" cy="12" r="1.2" fill="#e8f6ff"/><circle cx="14" cy="16" r="1.2" fill="#e8f6ff"/><circle cx="14" cy="20" r="1.2" fill="#e8f6ff"/><circle cx="14" cy="24" r="1.2" fill="#e8f6ff"/><circle cx="18" cy="12" r="1.2" fill="#e8f6ff"/><circle cx="18" cy="16" r="1.2" fill="#e8f6ff"/><circle cx="18" cy="20" r="1.2" fill="#e8f6ff"/><circle cx="18" cy="24" r="1.2" fill="#e8f6ff"/></svg><svg style="left:338px;top:1036px" width="32" height="32" viewBox="0 0 32 32"><circle cx="16" cy="16" r="16" fill="#fff"/><path d="M16 6.5a9.5 9.5 0 0 0-8.2 14.3L6.5 25.5l4.9-1.3A9.5 9.5 0 1 0 16 6.5z" fill="none" stroke="#25d366" stroke-width="1.8"/><path d="M12.5 11.5c.5-.5 1.2-.4 1.5.2l.8 1.8c.2.4 0 .8-.3 1.1l-.5.5c.7 1.4 1.8 2.5 3.2 3.2l.5-.5c.3-.3.7-.5 1.1-.3l1.8.8c.6.3.7 1 .2 1.5-1 1-2.4 1.2-3.6.6-2.2-1.1-4-2.9-5.1-5.1-.6-1.2-.4-2.6.4-3.8z" fill="#25d366"/></svg><svg style="left:396px;top:1038px" width="28" height="28" viewBox="0 0 28 28"><path d="M20.5 1L9.5 11 4.5 7 2 8.2v11.6L4.5 21l5-4L20.5 27 26 24.4V3.6z M4.5 10.2L7.4 14 4.5 17.8z M20.5 8.2v11.6L13 14z" fill="#1f9cf0"/><path d="M20.5 1L26 3.6v20.8L20.5 27z" fill="#0065a9" opacity=".6"/></svg><div class="a" style="left:408px;top:1073px;width:3px;height:3px;border-radius:2px;background:#b8c6d1"></div><svg style="left:451px;top:1037px" width="30" height="30" viewBox="0 0 30 30"><circle cx="15" cy="15" r="15" fill="#5865f2"/><path d="M8.5 10c1.5-1 3-1.5 4-1.6l.4.8a13 13 0 0 1 4.2 0l.4-.8c1 .1 2.5.6 4 1.6 1.4 2.3 2 4.7 1.8 7.2-1.3 1-2.6 1.6-3.8 2l-.8-1.3c.5-.2.9-.4 1.3-.7-2.7 1.2-6.3 1.2-9 0 .4.3.8.5 1.3.7l-.8 1.3c-1.2-.4-2.5-1-3.8-2-.3-2.5.4-4.9 1.8-7.2z" fill="#fff"/><circle cx="12" cy="15" r="1.4" fill="#5865f2"/><circle cx="18" cy="15" r="1.4" fill="#5865f2"/></svg><svg style="left:507px;top:1037px" width="30" height="30" viewBox="0 0 30 30"><defs><linearGradient id="st" x1="0" y1="0" x2="0" y2="1"><stop offset="0" stop-color="#1a2a4a"/><stop offset="1" stop-color="#1b6fb3"/></linearGradient></defs><circle cx="15" cy="15" r="14.5" fill="url(#st)"/><circle cx="19" cy="11" r="4.5" fill="none" stroke="#e6eef5" stroke-width="1.6"/><circle cx="19" cy="11" r="2.2" fill="#e6eef5"/><path d="M2 16l7 3" stroke="#e6eef5" stroke-width="3"/><circle cx="10.5" cy="19.5" r="3" fill="#e6eef5"/></svg><svg style="left:562px;top:1036px" width="32" height="32" viewBox="0 0 32 32"><rect width="32" height="32" fill="#52a535"/><rect x="6" y="8" width="7" height="7" fill="#0b0b0b"/><rect x="19" y="8" width="7" height="7" fill="#0b0b0b"/><rect x="12.5" y="15" width="7" height="5" fill="#0b0b0b"/><rect x="9" y="19" width="14" height="7" fill="#0b0b0b"/><rect x="12.5" y="24" width="7" height="3" fill="#52a535"/></svg><svg style="left:617px;top:1036px" width="32" height="32" viewBox="0 0 32 32"><circle cx="16" cy="16" r="16" fill="#0a58d6"/><path d="M21.5 11.5a7 7 0 1 0 0 9" stroke="#fff" stroke-width="4.2" fill="none"/></svg><svg style="left:674px;top:1036px" width="32" height="32" viewBox="0 0 32 32"><path d="M2 8l20-7 9 3-1 23-22 4-6-10z" fill="#22d88f"/><path d="M12 1l19 2-2 22z" fill="#9775f8"/><path d="M22 0l10 5-1 18z" fill="#fe2de9" opacity=".9"/><rect x="6" y="6" width="21" height="21" fill="#000"/><text x="8" y="17" font-size="10" font-weight="bold" fill="#fff" font-family="Liberation Sans">DG</text><rect x="8.5" y="22" width="7" height="1.5" fill="#fff"/></svg><svg style="left:730px;top:1036px" width="32" height="32" viewBox="0 0 32 32"><path d="M0 6l14-5 16 4 2 21-18 6-14-4z" fill="#dd1265"/><path d="M14 1l16 0 2 14z" fill="#fdb60d"/><path d="M22 4l10 8-2 14z" fill="#087cfa"/><rect x="6" y="6" width="21" height="21" fill="#000"/><text x="8" y="17" font-size="10" font-weight="bold" fill="#fff" font-family="Liberation Sans">RD</text><rect x="8.5" y="22" width="7" height="1.5" fill="#fff"/></svg><svg style="left:787px;top:1037px" width="30" height="30" viewBox="0 0 30 30"><circle cx="15" cy="15" r="15" fill="#f8f8f8"/><rect x="8" y="12" width="9" height="3" rx="1.5" fill="#36c5f0"/><rect x="12" y="7" width="3" height="9" rx="1.5" fill="#36c5f0"/><rect x="15" y="7" width="3" height="9" rx="1.5" fill="#2eb67d"/><rect x="13" y="12" width="9" height="3" rx="1.5" fill="#2eb67d"/><rect x="13" y="15" width="9" height="3" rx="1.5" fill="#ecb22e"/><rect x="15" y="14" width="3" height="9" rx="1.5" fill="#ecb22e"/><rect x="12" y="14" width="3" height="9" rx="1.5" fill="#e01e5a"/><rect x="8" y="15" width="9" height="3" rx="1.5" fill="#e01e5a"/></svg><svg style="left:842px;top:1036px" width="32" height="32" viewBox="0 0 32 32"><rect width="32" height="32" rx="7" fill="#1e1e22"/><path d="M13 5l8 2 4 10-4 10-9-2-4-8z" fill="#8b6cef"/><path d="M13 5l8 2-3 10-6 8z" fill="#a88bfa"/><path d="M12 25l9 2-3-10z" fill="#5b3fc4"/></svg><svg style="left:899px;top:1036px" width="30" height="32" viewBox="0 0 30 32"><path d="M0 13L15 2l15 11v17H0z" fill="#f4c430"/><rect x="5" y="6" width="20" height="14" fill="#f2f2f2"/><circle cx="15" cy="12" r="3.5" fill="none" stroke="#9aa" stroke-width="1.2"/><path d="M0 13l15 10 15-10v17H0z" fill="#fbd24c"/></svg><div class="a" style="left:912px;top:1073px;width:3px;height:3px;border-radius:2px;background:#b8c6d1"></div><svg style="left:954px;top:1036px" width="32" height="32" viewBox="0 0 32 32"><circle cx="16" cy="16" r="16" fill="#0b5cff"/><text x="16" y="19" font-size="8.5" font-weight="bold" fill="#fff" text-anchor="middle" font-family="Liberation Sans">zoom</text></svg><svg style="left:1012px;top:1037px" width="28" height="30" viewBox="0 0 28 30"><rect x="2" y="0" width="24" height="30" fill="#dcdcdc"/><rect x="0" y="2" width="28" height="26" fill="#dcdcdc"/><rect x="2" y="2" width="24" height="24" fill="#fafafa"/><rect x="9" y="7" width="3" height="9" fill="#111"/><rect x="16" y="7" width="3" height="9" fill="#111"/></svg><svg style="left:1067px;top:1036px" width="30" height="30" viewBox="0 0 30 30"><rect width="30" height="30" rx="3" fill="#5f707a"/><circle cx="15" cy="15" r="7" fill="none" stroke="#3d4a52" stroke-width="4" stroke-dasharray="3 2.5"/><circle cx="15" cy="15" r="5.5" fill="#3d4a52"/><circle cx="15" cy="15" r="2.5" fill="#5f707a"/></svg><div class="a" style="left:1058px;top:1073px;width:46px;height:3px;border-radius:2px;background:#a9dcf2"></div><div class="a" style="left:1424px;top:1047px;width:30px;height:10px;border-radius:5px;background:#c9e6fa"></div><div class="a" style="left:1458px;top:1049px;width:6px;height:6px;border-radius:3px;background:#66727c"></div><svg style="left:1495px;top:1041px" width="16" height="20" viewBox="0 0 16 20"><circle cx="8" cy="3" r="2.5" fill="#d7ecfa"/><path d="M1 7h14v2.5h-4.5V19h-2v-5h-1v5h-2V9.5H1z" fill="#d7ecfa"/></svg><div class="a" style="left:1544px;top:1044px;font-size:14px;font-weight:bold;letter-spacing:.5px;color:#d3ebf9">en</div><svg style="left:1585px;top:1042px" width="16" height="18" viewBox="0 0 16 18"><path d="M11 1a8.5 8.5 0 1 0 4 14.5A7 7 0 0 1 11 1z" fill="#d7ecfa"/></svg><svg style="left:1613px;top:1043px" width="18" height="14" viewBox="0 0 18 14"><path d="M9 14L0 4a13 13 0 0 1 18 0z" fill="#d7ecfa"/></svg><svg style="left:1642px;top:1042px" width="18" height="18" viewBox="0 0 18 18"><path d="M1 6h4l5-4.5v15L5 12H1z" fill="#d7ecfa"/><path d="M12.5 5.5a4 4 0 0 1 0 7M14.5 3a7.5 7.5 0 0 1 0 12" stroke="#d7ecfa" stroke-width="1.6" fill="none"/></svg><svg style="left:1671px;top:1042px" width="12" height="18" viewBox="0 0 12 18"><rect x="3.5" y="0" width="5" height="3" fill="#d7ecfa"/><rect x="0" y="2" width="12" height="16" rx="1.5" fill="#d7ecfa"/><path d="M7 5l-4 6h3l-1 4 4-6H6z" fill="#0d0f12"/></svg><div class="a" style="left:1690px;top:1044px;font-size:14px;font-weight:bold;letter-spacing:.5px;color:#d3ebf9">62%</div><div class="a" style="left:1750px;top:1044px;font-size:14px;font-weight:bold;letter-spacing:.5px;color:#d3ebf9">Thu Jan 15</div><div class="a" style="left:1841px;top:1044px;font-size:14px;font-weight:bold;letter-spacing:.5px;color:#d3ebf9">8:21 PM</div>
<div class="a" style="left:710px;top:246px;width:500px;height:536px;border-radius:12px 12px 0 0;box-shadow:0 3px 14px rgba(0,0,0,.6)"></div><div class="a" style="left:710px;top:246px;width:500px;height:536px;border-radius:12px 12px 0 0;background:#242a2e;overflow:hidden;box-shadow:0 0 0 1px rgba(0,0,0,.3)"><div class="a" style="left:0;top:36px;width:500px;height:500px;background:#efefef"></div><div class="a" style="left:0;top:11px;width:500px;text-align:center;font-size:14px;font-weight:bold;color:#cfe2f2;line-height:1">Besteam</div><div class="a" style="left:405px;top:7px;width:22px;height:22px;border-radius:11px;background:#2f363b"></div><svg style="left:411px;top:12px" width="10" height="12" viewBox="0 0 10 12"><path d="M1 6h8" stroke="#e6f1f8" stroke-width="1.8"/></svg><div class="a" style="left:438px;top:7px;width:22px;height:22px;border-radius:11px;background:#2f363b"></div><svg style="left:443px;top:11px" width="12" height="12" viewBox="0 0 12 12"><path d="M6.5 1.5h4v4M5.5 10.5h-4v-4" stroke="#e6f1f8" stroke-width="1.8" fill="none"/></svg><div class="a" style="left:471px;top:7px;width:22px;height:22px;border-radius:11px;background:#2f363b"></div><svg style="left:476px;top:12px" width="12" height="12" viewBox="0 0 12 12"><path d="M2 2l8 8M10 2l-8 8" stroke="#e6f1f8" stroke-width="1.9"/></svg><div class="a" style="left:0;top:44px;font-size:12px;color:#111">Put your steam ID</div></div>
</body></html>
